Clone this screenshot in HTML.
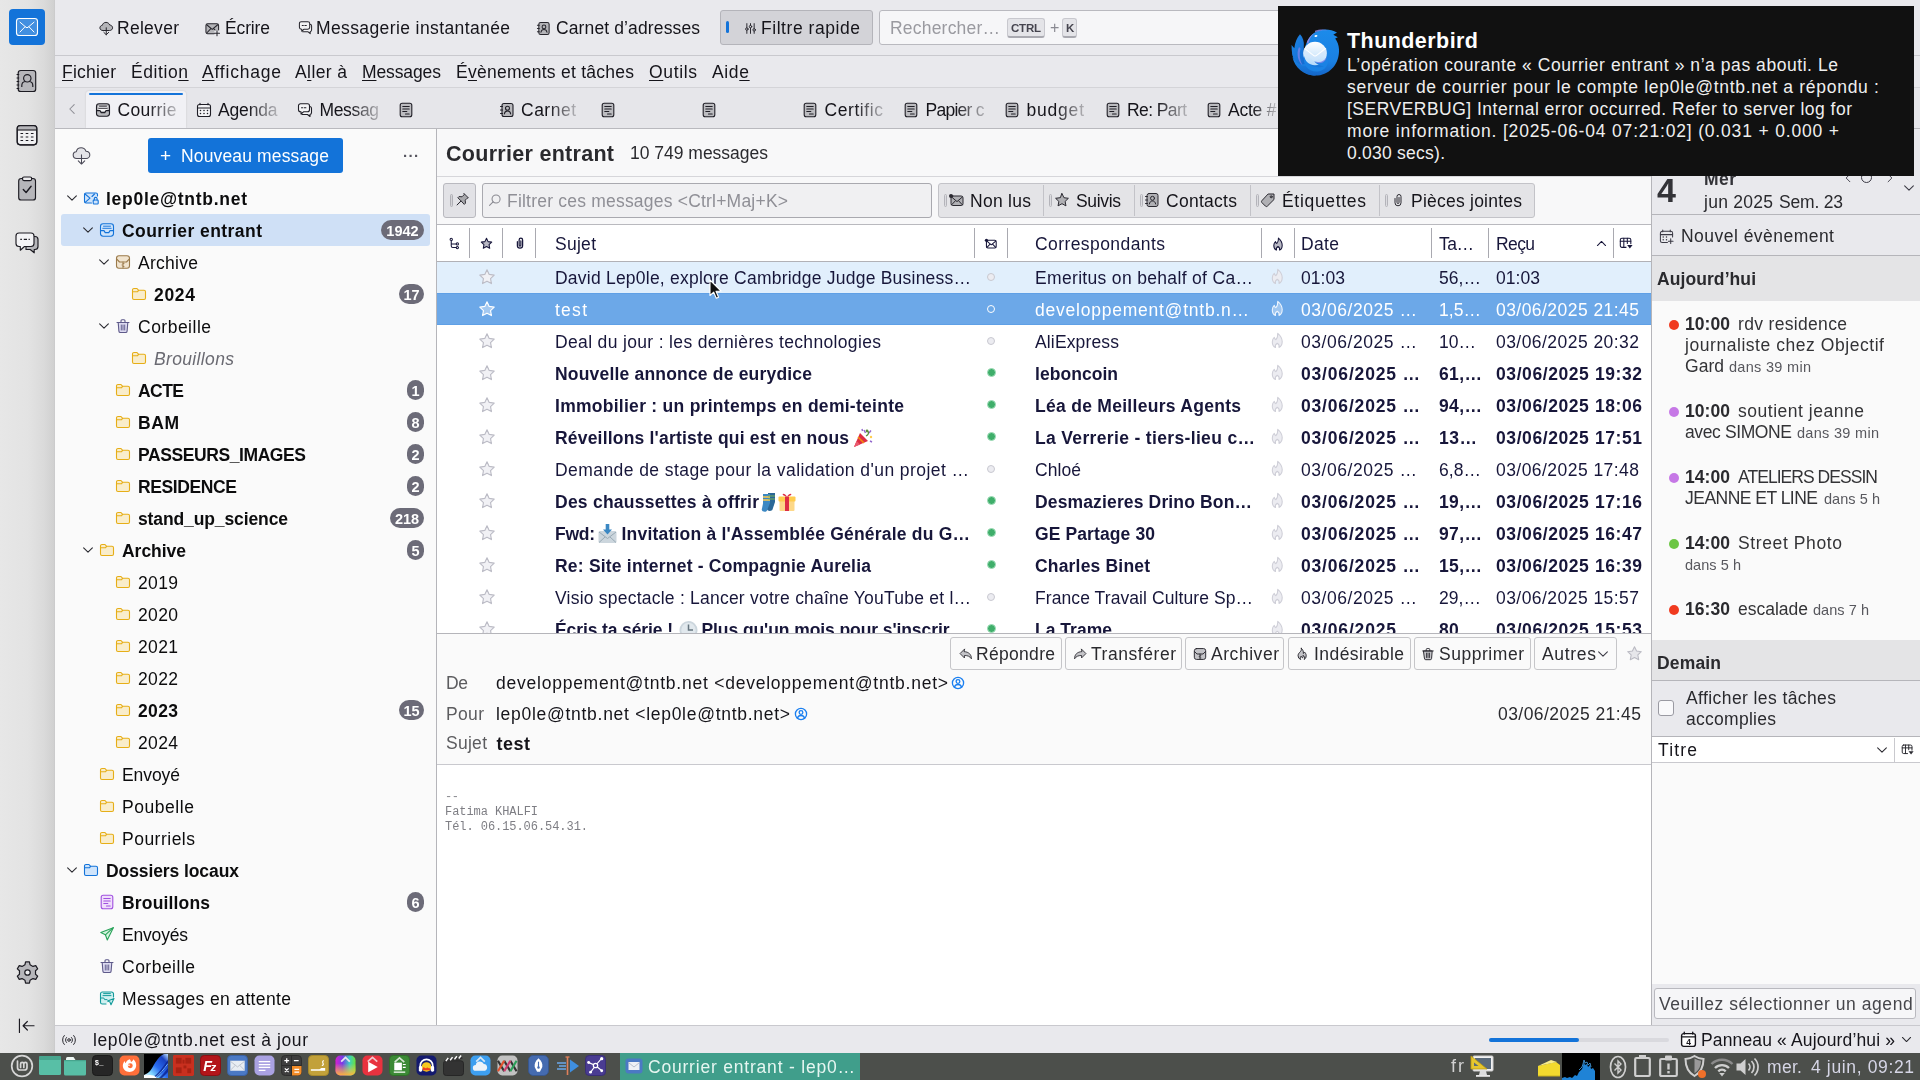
<!DOCTYPE html>
<html><head><meta charset="utf-8"><title>Courrier entrant - lep0le@tntb.net</title>
<style>
html,body{margin:0;padding:0;}
body{width:1920px;height:1080px;overflow:hidden;position:relative;background:#e9e9ed;font-family:"Liberation Sans",sans-serif;}
.a{position:absolute;box-sizing:border-box;}
.t{white-space:nowrap;}
.t span{display:inline-block;}
u{text-decoration:underline;text-underline-offset:2px;text-decoration-thickness:1px;}
</style></head><body><div id="w" style="position:absolute;left:0;top:0;width:1920px;height:1080px;will-change:transform;">
<div class="a" style="left:55px;top:0px;width:1865px;height:55px;background:#e9e9ed;"></div>
<div class="a" style="left:55px;top:55px;width:1865px;height:1px;background:#c9c9ce;"></div>
<div class="a" style="left:55px;top:56px;width:1865px;height:31px;background:#e9e9ed;"></div>
<div class="a" style="left:55px;top:87px;width:1865px;height:1px;background:#d4d4d8;"></div>
<div class="a" style="left:55px;top:88px;width:1865px;height:40px;background:#e6e6ea;"></div>
<div class="a" style="left:0;top:0;width:55px;height:1053px;background:linear-gradient(to right,#e7e7e7 0,#e3e3e3 28px,#dadada 44px,#d0d0d0 54px,#c6c6c8 55px);"></div>
<div class="a" style="left:9px;top:9px;width:36px;height:36px;background:#1373d9;border-radius:4px;"></div>
<svg class="a" style="left:15px;top:17px" width="24" height="20" viewBox="0 0 24 20"><rect x="1.500" y="1.500" width="21" height="17" rx="2.800" fill="#ffffff" fill-opacity=".2" stroke="#ffffff" stroke-width="1.100"/><path d="M5 5.200 11 10.300a1.500 1.500 0 0 0 2 0L19 5.200M5 15l5-5.200M19 15l-5-5.200" fill="none" stroke="#ffffff" stroke-width="1" stroke-linecap="round"/></svg>
<svg class="a" style="left:15px;top:68px" width="24" height="26" viewBox="0 0 24 26">
<rect x="3.200" y="2.500" width="17.500" height="21" rx="2.600" fill="#b6b6ba" stroke="#1c1b22" stroke-width="1.150"/>
<path d="M1.600 6.500h2.600M1.600 10h2.600M1.600 13.500h2.600M1.600 17h2.600M1.600 20.500h2.600" stroke="#1c1b22" stroke-width="1.100"/>
<circle cx="12.300" cy="10.300" r="3.700" fill="none" stroke="#1c1b22" stroke-width="1.150"/>
<path d="M6.800 19v-1.500c0-2.300 1.700-3.800 3.600-4M17.800 19v-1.500c0-2.300-1.700-3.800-3.600-4" fill="none" stroke="#1c1b22" stroke-width="1.150"/>
</svg>
<svg class="a" style="left:15px;top:123px" width="24" height="24" viewBox="0 0 24 24">
<rect x="2.200" y="2.600" width="19.600" height="19.200" rx="3" fill="#f0f0f2" stroke="#1c1b22" stroke-width="1.150"/>
<path d="M2.500 5.500a3 3 0 0 1 3-3h13a3 3 0 0 1 3 3v1.300h-19z" fill="#b6b6ba"/>
<path d="M2.200 7h19.600" stroke="#1c1b22" stroke-width="1.150"/>
<path d="M5.500 10.500h2.600M10.700 10.500h2.600M15.900 10.500h2.600M5.500 14h2.600M10.700 14h2.600M15.900 14h2.600M5.500 17.500h2.600M10.700 17.500h2.600M15.900 17.500h2.600" stroke="#1c1b22" stroke-width="1.150"/>
<rect x="2.200" y="2.600" width="19.600" height="19.200" rx="3" fill="none" stroke="#1c1b22" stroke-width="1.150"/>
</svg>
<svg class="a" style="left:15px;top:175px" width="24" height="27" viewBox="0 0 24 27">
<rect x="3.700" y="3.500" width="16.800" height="21.500" rx="2.600" fill="#b6b6ba" stroke="#1c1b22" stroke-width="1.150"/>
<rect x="7.500" y="2" width="9.200" height="3.600" rx="1.500" fill="#ececee" stroke="#1c1b22" stroke-width="1.200"/>
<path d="M8.300 14.500l2.800 3 5-6.200" fill="none" stroke="#1c1b22" stroke-width="1.400" stroke-linecap="round" stroke-linejoin="round"/>
</svg>
<svg class="a" style="left:14px;top:230px" width="26" height="25" viewBox="0 0 26 25">
<path d="M12 6.500h9a3 3 0 0 1 3 3v7a3 3 0 0 1-3 3h-.8v3.300l-4-3.300H12z" fill="#b6b6ba" stroke="#1c1b22" stroke-width="1.150" stroke-linejoin="round"/>
<path d="M5 3h12a3 3 0 0 1 3 3v7.500a3 3 0 0 1-3 3h-6.500l-4.200 3.700v-3.700H5a3 3 0 0 1-3-3V6a3 3 0 0 1 3-3z" fill="#f4f4f6" stroke="#1c1b22" stroke-width="1.150" stroke-linejoin="round"/>
<path d="M6.300 9.300h1.600M9.800 9.300h3.200M14.600 9.300h1.200" stroke="#1c1b22" stroke-width="1.200"/>
</svg>
<svg style="position:absolute;left:15.5px;top:960.5px;overflow:visible" width="23" height="23" viewBox="0 0 16 16" ><path d="M6.24 2.58 L6.67 0.62 L9.33 0.62 L9.76 2.58 L11.81 3.76 L13.73 3.16 L15.06 5.46 L13.58 6.81 L13.58 9.19 L15.06 10.54 L13.73 12.84 L11.81 12.24 L9.76 13.42 L9.33 15.38 L6.67 15.38 L6.24 13.42 L4.19 12.24 L2.27 12.84 L0.94 10.54 L2.42 9.19 L2.42 6.81 L0.94 5.46 L2.27 3.16 L4.19 3.76Z" fill="#b6b6ba" stroke="#1c1b22" stroke-width="0.85" stroke-linecap="round" stroke-linejoin="round" stroke-linejoin="round"/><circle cx="8" cy="8" r="1.900" fill="#ededef" stroke="#1c1b22" stroke-width="0.85" stroke-linecap="round" stroke-linejoin="round"/></svg>
<svg style="position:absolute;left:16.5px;top:1015.8px;overflow:visible" width="19.5" height="19.5" viewBox="0 0 16 16" ><path d="M2 2.5v11M14 8H5M8.5 4.5 5 8l3.5 3.5" fill="none" stroke="#1c1b22" stroke-width="0.95" stroke-linecap="round" stroke-linejoin="round"/></svg>
<svg style="position:absolute;left:98.5px;top:20.5px;overflow:visible" width="14.5" height="14.5" viewBox="0 0 16 16" ><path d="M4 10.500C2.300 10.500 1 9.200 1 7.600 1 6.100 2.100 4.900 3.600 4.800 4 2.900 5.700 1.500 7.700 1.500c1.900 0 3.500 1.200 4.100 2.900C13.600 4.500 15 5.900 15 7.500c0 1.700-1.400 3-3 3z" fill="#b4b4b8" stroke="#26252c" stroke-width="1.1" stroke-linecap="round" stroke-linejoin="round"/><path d="M8 7.500v7.700M5.300 12.500 8 15.200l2.700-2.700" fill="none" stroke="#26252c" stroke-width="1.1" stroke-linecap="round" stroke-linejoin="round"/></svg>
<div class="a t" style="left:117px;top:16.0px;height:24px;line-height:24px;font-size:17.5px;color:#15141a;letter-spacing:0.281px;"><span id="t1">Relever</span></div>
<svg style="position:absolute;left:205px;top:20.5px;overflow:visible" width="15" height="15" viewBox="0 0 16 16" ><rect x="1" y="3" width="13.500" height="10.500" rx="1.800" fill="#b4b4b8" stroke="#26252c" stroke-width="1.1" stroke-linecap="round" stroke-linejoin="round"/><path d="M1.800 4 7.700 9l5.900-5M1.800 12.800l4.200-4.300M9.500 8.500l1.500 1.500" fill="none" stroke="#26252c" stroke-width="1.1" stroke-linecap="round" stroke-linejoin="round"/><rect x="10" y="10" width="6" height="6" fill="#e9e9ed" stroke="none"/><path d="M12.800 10.300v5.400M10.100 13h5.400" fill="none" stroke="#26252c" stroke-width="1.1" stroke-linecap="round" stroke-linejoin="round"/></svg>
<div class="a t" style="left:225px;top:16.0px;height:24px;line-height:24px;font-size:17.5px;color:#15141a;letter-spacing:-0.141px;"><span id="t2">Écrire</span></div>
<svg style="position:absolute;left:297.5px;top:20px;overflow:visible" width="15" height="15" viewBox="0 0 16 16" ><path d="M5 12.5h5.5l2.5 2v-2a2 2 0 0 0 1.5-2V6.5a2 2 0 0 0-2-2" fill="#f2f2f4" stroke="#26252c" stroke-width="1.1" stroke-linecap="round" stroke-linejoin="round"/><path d="M3.5 1.8h7a2 2 0 0 1 2 2v4a2 2 0 0 1-2 2H6.5l-2.5 2.2v-2.2h-.5a2 2 0 0 1-2-2v-4a2 2 0 0 1 2-2z" fill="#f2f2f4" stroke="#26252c" stroke-width="1.1" stroke-linecap="round" stroke-linejoin="round"/><path d="M4.5 5.8h1.2M7.3 5.8h1.6" fill="none" stroke="#26252c" stroke-width="1.1" stroke-linecap="round" stroke-linejoin="round"/></svg>
<div class="a t" style="left:316px;top:16.0px;height:24px;line-height:24px;font-size:17.5px;color:#15141a;letter-spacing:0.390px;"><span id="t3">Messagerie instantanée</span></div>
<svg style="position:absolute;left:536px;top:20.5px;overflow:visible" width="15" height="15" viewBox="0 0 16 16" ><rect x="3" y="1.5" width="11" height="13" rx="2" fill="#b4b4b8" stroke="#26252c" stroke-width="1.1" stroke-linecap="round" stroke-linejoin="round"/><path d="M1.5 4.5h2M1.5 8h2M1.5 11.5h2" fill="none" stroke="#26252c" stroke-width="1.1" stroke-linecap="round" stroke-linejoin="round"/><circle cx="8.5" cy="6.3" r="2" fill="none" stroke="#26252c" stroke-width="1.1" stroke-linecap="round" stroke-linejoin="round"/><path d="M5.3 12c.3-2 1.6-3 3.2-3s2.9 1 3.2 3" fill="none" stroke="#26252c" stroke-width="1.1" stroke-linecap="round" stroke-linejoin="round"/></svg>
<div class="a t" style="left:556px;top:16.0px;height:24px;line-height:24px;font-size:17.5px;color:#15141a;letter-spacing:0.124px;"><span id="t4">Carnet d’adresses</span></div>
<div class="a" style="left:720px;top:10px;width:153px;height:35px;background:#d3d3d8;border:1px solid #b4b4ba;border-radius:3px;"></div>
<div class="a" style="left:726px;top:21px;width:3px;height:12px;background:#1373d9;border-radius:1.5px;"></div>
<svg style="position:absolute;left:743.5px;top:21.5px;overflow:visible" width="13" height="13" viewBox="0 0 16 16" ><path d="M3.5 2v5M3.5 10.5V14M8 2v2M8 7.5V14M12.5 2v6M12.5 11.5V14" fill="none" stroke="#26252c" stroke-width="1.2" stroke-linecap="round" stroke-linejoin="round"/><circle cx="3.5" cy="8.7" r="1.5" fill="none" stroke="#26252c" stroke-width="1.2" stroke-linecap="round" stroke-linejoin="round"/><circle cx="8" cy="5.7" r="1.5" fill="none" stroke="#26252c" stroke-width="1.2" stroke-linecap="round" stroke-linejoin="round"/><circle cx="12.5" cy="9.7" r="1.5" fill="none" stroke="#26252c" stroke-width="1.2" stroke-linecap="round" stroke-linejoin="round"/></svg>
<div class="a t" style="left:761px;top:16.0px;height:24px;line-height:24px;font-size:17.5px;color:#15141a;letter-spacing:0.549px;"><span id="t5">Filtre rapide</span></div>
<div class="a" style="left:879px;top:10px;width:420px;height:35px;background:#f6f6f8;border:1px solid #b9b9bf;border-radius:3px;"></div>
<div class="a t" style="left:890px;top:16.0px;height:24px;line-height:24px;font-size:17.5px;color:#9a9aa0;letter-spacing:0.203px;"><span id="t6">Rechercher…</span></div>
<div class="a" style="left:1007px;top:18px;width:38px;height:20px;background:#e4e4e8;border:1px solid #c8c8ce;border-radius:3px;border-bottom:2px solid #a9a9b0;"></div>
<div class="a t" style="left:1011px;top:16.0px;height:24px;line-height:24px;font-size:11.5px;color:#45444e;font-weight:bold;letter-spacing:-0.222px;"><span id="t7">CTRL</span></div>
<div class="a t" style="left:1050px;top:16.0px;height:24px;line-height:24px;font-size:16px;color:#8a8a92;"><span id="t8">+</span></div>
<div class="a" style="left:1062px;top:18px;width:15px;height:20px;background:#e4e4e8;border:1px solid #c8c8ce;border-radius:3px;border-bottom:2px solid #a9a9b0;"></div>
<div class="a t" style="left:1066px;top:16.0px;height:24px;line-height:24px;font-size:11.5px;color:#45444e;font-weight:bold;letter-spacing:-0.312px;"><span id="t9">K</span></div>
<div class="a t" style="left:62px;top:60.0px;height:24px;line-height:24px;font-size:17.5px;color:#15141a;letter-spacing:0.246px;"><span id="t10"><u>F</u>ichier</span></div>
<div class="a t" style="left:131px;top:60.0px;height:24px;line-height:24px;font-size:17.5px;color:#15141a;letter-spacing:0.577px;"><span id="t11">Éditio<u>n</u></span></div>
<div class="a t" style="left:202px;top:60.0px;height:24px;line-height:24px;font-size:17.5px;color:#15141a;letter-spacing:0.793px;"><span id="t12"><u>A</u>ffichage</span></div>
<div class="a t" style="left:295px;top:60.0px;height:24px;line-height:24px;font-size:17.5px;color:#15141a;letter-spacing:0.395px;"><span id="t13">A<u>l</u>ler à</span></div>
<div class="a t" style="left:362px;top:60.0px;height:24px;line-height:24px;font-size:17.5px;color:#15141a;letter-spacing:-0.109px;"><span id="t14"><u>M</u>essages</span></div>
<div class="a t" style="left:456px;top:60.0px;height:24px;line-height:24px;font-size:17.5px;color:#15141a;letter-spacing:0.253px;"><span id="t15">É<u>v</u>ènements et tâches</span></div>
<div class="a t" style="left:649px;top:60.0px;height:24px;line-height:24px;font-size:17.5px;color:#15141a;letter-spacing:0.650px;"><span id="t16"><u>O</u>utils</span></div>
<div class="a t" style="left:712px;top:60.0px;height:24px;line-height:24px;font-size:17.5px;color:#15141a;letter-spacing:0.656px;"><span id="t17">Aid<u>e</u></span></div>
<svg style="position:absolute;left:65px;top:102px;overflow:visible" width="14" height="14" viewBox="0 0 16 16" ><path d="M10.5 3 5.5 8l5 5" fill="none" stroke="#8f8f96" stroke-width="1.2" stroke-linecap="round" stroke-linejoin="round"/></svg>
<div class="a" style="left:86px;top:91px;width:100px;height:37px;background:#f1f1f5;border-radius:3px;border-bottom-left-radius:0;border-bottom-right-radius:0;box-shadow:0 0 2px rgba(0,0,0,.15);"></div>
<div class="a" style="left:89px;top:93px;width:94px;height:2px;background:#1373d9;border-radius:1px;"></div>
<svg style="position:absolute;left:94.5px;top:102px;overflow:visible" width="16" height="16" viewBox="0 0 16 16" ><rect x="1.500" y="1.800" width="13" height="12.400" rx="2.600" fill="#b8b8bc" stroke="#1f1e26" stroke-width="1.1" stroke-linecap="round" stroke-linejoin="round"/><path d="M3.500 4h9v5h-9z" fill="#f6f6f8" stroke="none"/><path d="M1.800 8.600h3.200l1.200 2h3.600l1.200-2h3.200" fill="none" stroke="#1f1e26" stroke-width="1.1" stroke-linecap="round" stroke-linejoin="round"/><path d="M3.800 6.300h8.400M4.500 4.200h7" fill="none" stroke="#1f1e26" stroke-width="0.935" stroke-linecap="round" stroke-linejoin="round"/></svg>
<div class="a t" style="left:117.5px;top:98.0px;height:24px;line-height:24px;font-size:17.5px;color:#15141a;letter-spacing:0.268px;width:63px;overflow:hidden;-webkit-mask-image:linear-gradient(to right,#000 29.5px,transparent 67.85px);mask-image:linear-gradient(to right,#000 29.5px,transparent 67.85px);"><span id="t18">Courrie</span></div>
<svg style="position:absolute;left:195.5px;top:102px;overflow:visible" width="16" height="16" viewBox="0 0 16 16" ><rect x="1.5" y="2.5" width="13" height="12" rx="2" fill="#f4f4f6" stroke="#1f1e26" stroke-width="1.1" stroke-linecap="round" stroke-linejoin="round"/><path d="M1.5 6h13" fill="none" stroke="#1f1e26" stroke-width="1.1" stroke-linecap="round" stroke-linejoin="round"/><path d="M4 1.2v1.6M12 1.2v1.6" fill="none" stroke="#1f1e26" stroke-width="1.1" stroke-linecap="round" stroke-linejoin="round"/><path d="M4.5 8.5h.01M8 8.5h.01M11.5 8.5h.01M4.5 11.5h.01M8 11.5h.01M11.5 11.5h.01" fill="none" stroke="#1f1e26" stroke-width="1.54" stroke-linecap="round" stroke-linejoin="round"/></svg>
<div class="a t" style="left:218px;top:98.0px;height:24px;line-height:24px;font-size:17.5px;color:#15141a;letter-spacing:-0.168px;width:63.5px;overflow:hidden;-webkit-mask-image:linear-gradient(to right,#000 29.75px,transparent 68.425px);mask-image:linear-gradient(to right,#000 29.75px,transparent 68.425px);"><span id="t19">Agenda</span></div>
<svg style="position:absolute;left:296.5px;top:102px;overflow:visible" width="16" height="16" viewBox="0 0 16 16" ><path d="M5 12.5h5.5l2.5 2v-2a2 2 0 0 0 1.5-2V6.5a2 2 0 0 0-2-2" fill="#f4f4f6" stroke="#1f1e26" stroke-width="1.1" stroke-linecap="round" stroke-linejoin="round"/><path d="M3.5 1.8h7a2 2 0 0 1 2 2v4a2 2 0 0 1-2 2H6.5l-2.5 2.2v-2.2h-.5a2 2 0 0 1-2-2v-4a2 2 0 0 1 2-2z" fill="#f4f4f6" stroke="#1f1e26" stroke-width="1.1" stroke-linecap="round" stroke-linejoin="round"/><path d="M4.5 5.8h1.2M7.3 5.8h1.6" fill="none" stroke="#1f1e26" stroke-width="1.1" stroke-linecap="round" stroke-linejoin="round"/></svg>
<div class="a t" style="left:319.5px;top:98.0px;height:24px;line-height:24px;font-size:17.5px;color:#15141a;letter-spacing:-0.355px;width:63.5px;overflow:hidden;-webkit-mask-image:linear-gradient(to right,#000 29.75px,transparent 68.425px);mask-image:linear-gradient(to right,#000 29.75px,transparent 68.425px);"><span id="t20">Messag</span></div>
<svg style="position:absolute;left:397.5px;top:102px;overflow:visible" width="16" height="16" viewBox="0 0 16 16" ><rect x="2.200" y="1.200" width="11.600" height="13.600" rx="2" fill="#bcbcc0" stroke="#1f1e26" stroke-width="1.1" stroke-linecap="round" stroke-linejoin="round"/><path d="M4.800 4.500h6.400M4.800 7h6.400M4.800 9.500h4M7.500 12h3.700" fill="none" stroke="#1f1e26" stroke-width="1.1" stroke-linecap="round" stroke-linejoin="round"/></svg>
<svg style="position:absolute;left:498.5px;top:102px;overflow:visible" width="16" height="16" viewBox="0 0 16 16" ><rect x="3" y="1.5" width="11" height="13" rx="2" fill="#b8b8bc" stroke="#1f1e26" stroke-width="1.1" stroke-linecap="round" stroke-linejoin="round"/><path d="M1.5 4.5h2M1.5 8h2M1.5 11.5h2" fill="none" stroke="#1f1e26" stroke-width="1.1" stroke-linecap="round" stroke-linejoin="round"/><circle cx="8.5" cy="6.3" r="2" fill="none" stroke="#1f1e26" stroke-width="1.1" stroke-linecap="round" stroke-linejoin="round"/><path d="M5.3 12c.3-2 1.6-3 3.2-3s2.9 1 3.2 3" fill="none" stroke="#1f1e26" stroke-width="1.1" stroke-linecap="round" stroke-linejoin="round"/></svg>
<div class="a t" style="left:521px;top:98.0px;height:24px;line-height:24px;font-size:17.5px;color:#15141a;letter-spacing:0.493px;width:59px;overflow:hidden;-webkit-mask-image:linear-gradient(to right,#000 27.5px,transparent 63.24999999999999px);mask-image:linear-gradient(to right,#000 27.5px,transparent 63.24999999999999px);"><span id="t21">Carnet</span></div>
<svg style="position:absolute;left:599.5px;top:102px;overflow:visible" width="16" height="16" viewBox="0 0 16 16" ><rect x="2.200" y="1.200" width="11.600" height="13.600" rx="2" fill="#bcbcc0" stroke="#1f1e26" stroke-width="1.1" stroke-linecap="round" stroke-linejoin="round"/><path d="M4.800 4.500h6.400M4.800 7h6.400M4.800 9.500h4M7.500 12h3.700" fill="none" stroke="#1f1e26" stroke-width="1.1" stroke-linecap="round" stroke-linejoin="round"/></svg>
<svg style="position:absolute;left:700.5px;top:102px;overflow:visible" width="16" height="16" viewBox="0 0 16 16" ><rect x="2.200" y="1.200" width="11.600" height="13.600" rx="2" fill="#bcbcc0" stroke="#1f1e26" stroke-width="1.1" stroke-linecap="round" stroke-linejoin="round"/><path d="M4.800 4.500h6.400M4.800 7h6.400M4.800 9.500h4M7.500 12h3.700" fill="none" stroke="#1f1e26" stroke-width="1.1" stroke-linecap="round" stroke-linejoin="round"/></svg>
<svg style="position:absolute;left:801.5px;top:102px;overflow:visible" width="16" height="16" viewBox="0 0 16 16" ><rect x="2.200" y="1.200" width="11.600" height="13.600" rx="2" fill="#bcbcc0" stroke="#1f1e26" stroke-width="1.1" stroke-linecap="round" stroke-linejoin="round"/><path d="M4.800 4.500h6.400M4.800 7h6.400M4.800 9.500h4M7.500 12h3.700" fill="none" stroke="#1f1e26" stroke-width="1.1" stroke-linecap="round" stroke-linejoin="round"/></svg>
<div class="a t" style="left:824.5px;top:98.0px;height:24px;line-height:24px;font-size:17.5px;color:#15141a;letter-spacing:0.578px;width:62.5px;overflow:hidden;-webkit-mask-image:linear-gradient(to right,#000 29.25px,transparent 67.27499999999999px);mask-image:linear-gradient(to right,#000 29.25px,transparent 67.27499999999999px);"><span id="t22">Certific</span></div>
<svg style="position:absolute;left:902.5px;top:102px;overflow:visible" width="16" height="16" viewBox="0 0 16 16" ><rect x="2.200" y="1.200" width="11.600" height="13.600" rx="2" fill="#bcbcc0" stroke="#1f1e26" stroke-width="1.1" stroke-linecap="round" stroke-linejoin="round"/><path d="M4.800 4.500h6.400M4.800 7h6.400M4.800 9.500h4M7.500 12h3.700" fill="none" stroke="#1f1e26" stroke-width="1.1" stroke-linecap="round" stroke-linejoin="round"/></svg>
<div class="a t" style="left:925.5px;top:98.0px;height:24px;line-height:24px;font-size:17.5px;color:#15141a;letter-spacing:-0.744px;width:63px;overflow:hidden;-webkit-mask-image:linear-gradient(to right,#000 29.5px,transparent 67.85px);mask-image:linear-gradient(to right,#000 29.5px,transparent 67.85px);"><span id="t23">Papier c</span></div>
<svg style="position:absolute;left:1003.5px;top:102px;overflow:visible" width="16" height="16" viewBox="0 0 16 16" ><rect x="2.200" y="1.200" width="11.600" height="13.600" rx="2" fill="#bcbcc0" stroke="#1f1e26" stroke-width="1.1" stroke-linecap="round" stroke-linejoin="round"/><path d="M4.800 4.500h6.400M4.800 7h6.400M4.800 9.500h4M7.500 12h3.700" fill="none" stroke="#1f1e26" stroke-width="1.1" stroke-linecap="round" stroke-linejoin="round"/></svg>
<div class="a t" style="left:1026.5px;top:98.0px;height:24px;line-height:24px;font-size:17.5px;color:#15141a;letter-spacing:0.793px;width:61.5px;overflow:hidden;-webkit-mask-image:linear-gradient(to right,#000 28.75px,transparent 66.125px);mask-image:linear-gradient(to right,#000 28.75px,transparent 66.125px);"><span id="t24">budget</span></div>
<svg style="position:absolute;left:1104.5px;top:102px;overflow:visible" width="16" height="16" viewBox="0 0 16 16" ><rect x="2.200" y="1.200" width="11.600" height="13.600" rx="2" fill="#bcbcc0" stroke="#1f1e26" stroke-width="1.1" stroke-linecap="round" stroke-linejoin="round"/><path d="M4.800 4.500h6.400M4.800 7h6.400M4.800 9.500h4M7.500 12h3.700" fill="none" stroke="#1f1e26" stroke-width="1.1" stroke-linecap="round" stroke-linejoin="round"/></svg>
<div class="a t" style="left:1127px;top:98.0px;height:24px;line-height:24px;font-size:17.5px;color:#15141a;letter-spacing:-0.599px;width:64px;overflow:hidden;-webkit-mask-image:linear-gradient(to right,#000 30.0px,transparent 69.0px);mask-image:linear-gradient(to right,#000 30.0px,transparent 69.0px);"><span id="t25">Re: Part</span></div>
<svg style="position:absolute;left:1205.5px;top:102px;overflow:visible" width="16" height="16" viewBox="0 0 16 16" ><rect x="2.200" y="1.200" width="11.600" height="13.600" rx="2" fill="#bcbcc0" stroke="#1f1e26" stroke-width="1.1" stroke-linecap="round" stroke-linejoin="round"/><path d="M4.800 4.500h6.400M4.800 7h6.400M4.800 9.500h4M7.500 12h3.700" fill="none" stroke="#1f1e26" stroke-width="1.1" stroke-linecap="round" stroke-linejoin="round"/></svg>
<div class="a t" style="left:1228px;top:98.0px;height:24px;line-height:24px;font-size:17.5px;color:#15141a;letter-spacing:-0.223px;width:52.5px;overflow:hidden;-webkit-mask-image:linear-gradient(to right,#000 24.25px,transparent 55.775px);mask-image:linear-gradient(to right,#000 24.25px,transparent 55.775px);"><span id="t26">Acte #</span></div>
<div class="a" style="left:55px;top:128px;width:381px;height:898px;background:#fafafa;"></div>
<div class="a" style="left:436px;top:128px;width:1px;height:898px;background:#b5b5ba;"></div>
<svg style="position:absolute;left:72px;top:146px;overflow:visible" width="19" height="19" viewBox="0 0 16 16" ><path d="M4 10.500C2.300 10.500 1 9.200 1 7.600 1 6.100 2.100 4.900 3.600 4.800 4 2.900 5.700 1.500 7.700 1.500c1.900 0 3.500 1.200 4.100 2.900C13.600 4.500 15 5.900 15 7.500c0 1.700-1.400 3-3 3z" fill="#e4e4e8" stroke="#4a4956" stroke-width="0.9" stroke-linecap="round" stroke-linejoin="round"/><path d="M8 7.500v7.700M5.300 12.500 8 15.200l2.700-2.700" fill="none" stroke="#4a4956" stroke-width="0.9" stroke-linecap="round" stroke-linejoin="round"/></svg>
<div class="a" style="left:148px;top:138px;width:195px;height:35px;background:#1373d9;border-radius:3px;"></div>
<div class="a t" style="left:160px;top:143.5px;height:24px;line-height:24px;font-size:19px;color:#fff;"><span id="t27">+</span></div>
<div class="a t" style="left:181px;top:144.0px;height:24px;line-height:24px;font-size:17.5px;color:#fff;letter-spacing:0.147px;"><span id="t28">Nouveau message</span></div>
<div class="a t" style="left:403px;top:143.5px;height:24px;line-height:24px;font-size:15px;color:#55545e;font-weight:bold;letter-spacing:0.5px;"><span id="t29">···</span></div>
<svg style="position:absolute;left:65px;top:191px;overflow:visible" width="14" height="14" viewBox="0 0 16 16" ><path d="M3 5.5 8 10.5l5-5" fill="none" stroke="#2a2a30" stroke-width="1.25" stroke-linecap="round" stroke-linejoin="round"/></svg>
<svg style="position:absolute;left:83px;top:189.8px;overflow:visible" width="16" height="16" viewBox="0 0 16 16" ><path d="M14.5 6V4.5A1.5 1.5 0 0 0 13 3H3A1.5 1.5 0 0 0 1.5 4.5v7A1.5 1.5 0 0 0 3 13h5.5" fill="#cfe4fb" stroke="#1373d9" stroke-width="1.1" stroke-linecap="round" stroke-linejoin="round"/><path d="M2 4l5 4.2L2.2 12.4M9 6.5 11.5 4" fill="none" stroke="#1373d9" stroke-width="1.1" stroke-linecap="round" stroke-linejoin="round"/><rect x="10.2" y="10" width="5" height="4" rx="0.8" fill="#cfe4fb" stroke="#1373d9" stroke-width="1.1" stroke-linecap="round" stroke-linejoin="round"/><path d="M11.3 10V8.8a1.4 1.4 0 0 1 2.8 0V10" fill="none" stroke="#1373d9" stroke-width="1.1" stroke-linecap="round" stroke-linejoin="round"/></svg>
<div class="a t" style="left:106px;top:186.6px;height:24px;line-height:24px;font-size:17.5px;color:#0c0c0d;font-weight:bold;letter-spacing:0.727px;"><span id="t30">lep0le@tntb.net</span></div>
<div class="a" style="left:61px;top:214px;width:369px;height:32px;background:#cfe0f6;border-radius:3px;"></div>
<svg style="position:absolute;left:81px;top:223px;overflow:visible" width="14" height="14" viewBox="0 0 16 16" ><path d="M3 5.5 8 10.5l5-5" fill="none" stroke="#2a2a30" stroke-width="1.25" stroke-linecap="round" stroke-linejoin="round"/></svg>
<svg style="position:absolute;left:99px;top:221.8px;overflow:visible" width="16" height="16" viewBox="0 0 16 16" ><rect x="1.500" y="1.800" width="13" height="12.400" rx="2.600" fill="#cfe4fb" stroke="#1373d9" stroke-width="1.1" stroke-linecap="round" stroke-linejoin="round"/><path d="M3.500 4h9v5h-9z" fill="none" stroke="none"/><path d="M1.800 8.600h3.200l1.200 2h3.600l1.200-2h3.200" fill="none" stroke="#1373d9" stroke-width="1.1" stroke-linecap="round" stroke-linejoin="round"/><path d="M3.800 6.300h8.400M4.500 4.200h7" fill="none" stroke="#1373d9" stroke-width="0.935" stroke-linecap="round" stroke-linejoin="round"/></svg>
<div class="a t" style="left:122px;top:218.6px;height:24px;line-height:24px;font-size:17.5px;color:#0c0c0d;font-weight:bold;letter-spacing:0.452px;"><span id="t31">Courrier entrant</span></div>
<div class="a" style="left:381px;top:220px;width:43px;height:20px;background:#6c6b78;border-radius:10px;"></div>
<div class="a t" style="left:381px;top:218.5px;height:24px;line-height:24px;font-size:14.5px;color:#fff;font-weight:bold;width:43px;text-align:center;"><span id="t32">1942</span></div>
<svg style="position:absolute;left:97px;top:255px;overflow:visible" width="14" height="14" viewBox="0 0 16 16" ><path d="M3 5.5 8 10.5l5-5" fill="none" stroke="#2a2a30" stroke-width="1.25" stroke-linecap="round" stroke-linejoin="round"/></svg>
<svg style="position:absolute;left:115px;top:253.8px;overflow:visible" width="16" height="16" viewBox="0 0 16 16" ><rect x="1.5" y="1.8" width="13" height="12.4" rx="2.5" fill="#f1e4cf" stroke="#9b7a4a" stroke-width="1.1" stroke-linecap="round" stroke-linejoin="round"/><path d="M1.8 5.2 4.5 8h7l2.7-2.8" fill="none" stroke="#9b7a4a" stroke-width="1.1" stroke-linecap="round" stroke-linejoin="round"/><path d="M8 8v6M8 9.5h1M8 11h-1M8 12.5h1" fill="none" stroke="#9b7a4a" stroke-width="0.8800000000000001" stroke-linecap="round" stroke-linejoin="round"/></svg>
<div class="a t" style="left:138px;top:250.60000000000002px;height:24px;line-height:24px;font-size:17.5px;color:#0c0c0d;letter-spacing:0.273px;"><span id="t33">Archive</span></div>
<svg style="position:absolute;left:131px;top:285.8px;overflow:visible" width="16" height="16" viewBox="0 0 16 16" ><path d="M1.5 4a1.5 1.5 0 0 1 1.5-1.5h3l1.6 1.8H13A1.5 1.5 0 0 1 14.5 5.8v6.2A1.5 1.5 0 0 1 13 13.5H3A1.5 1.5 0 0 1 1.5 12z" fill="#f9edcb" stroke="#e6ae17" stroke-width="1.1" stroke-linecap="round" stroke-linejoin="round"/><path d="M1.8 5.8h4.6l1.2-1.4" fill="none" stroke="#e6ae17" stroke-width="1.1" stroke-linecap="round" stroke-linejoin="round"/></svg>
<div class="a t" style="left:154px;top:282.6px;height:24px;line-height:24px;font-size:17.5px;color:#0c0c0d;font-weight:bold;letter-spacing:0.688px;"><span id="t34">2024</span></div>
<div class="a" style="left:399px;top:284px;width:25px;height:20px;background:#6c6b78;border-radius:10px;"></div>
<div class="a t" style="left:399px;top:282.5px;height:24px;line-height:24px;font-size:14.5px;color:#fff;font-weight:bold;width:25px;text-align:center;"><span id="t35">17</span></div>
<svg style="position:absolute;left:97px;top:319px;overflow:visible" width="14" height="14" viewBox="0 0 16 16" ><path d="M3 5.5 8 10.5l5-5" fill="none" stroke="#2a2a30" stroke-width="1.25" stroke-linecap="round" stroke-linejoin="round"/></svg>
<svg style="position:absolute;left:115px;top:317.8px;overflow:visible" width="16" height="16" viewBox="0 0 16 16" ><path d="M3.2 4.5h9.6l-.7 8.6a1.5 1.5 0 0 1-1.5 1.4H5.4a1.5 1.5 0 0 1-1.5-1.4z" fill="#dcdaf0" stroke="#5e5a8a" stroke-width="1.1" stroke-linecap="round" stroke-linejoin="round"/><path d="M2 4.5h12M6 4.2V2.8a1 1 0 0 1 1-1h2a1 1 0 0 1 1 1v1.4" fill="none" stroke="#5e5a8a" stroke-width="1.1" stroke-linecap="round" stroke-linejoin="round"/><path d="M6.3 7v5M8 7v5M9.7 7v5" fill="none" stroke="#5e5a8a" stroke-width="0.935" stroke-linecap="round" stroke-linejoin="round"/></svg>
<div class="a t" style="left:138px;top:314.6px;height:24px;line-height:24px;font-size:17.5px;color:#0c0c0d;letter-spacing:0.492px;"><span id="t36">Corbeille</span></div>
<svg style="position:absolute;left:131px;top:349.8px;overflow:visible" width="16" height="16" viewBox="0 0 16 16" ><path d="M1.5 4a1.5 1.5 0 0 1 1.5-1.5h3l1.6 1.8H13A1.5 1.5 0 0 1 14.5 5.8v6.2A1.5 1.5 0 0 1 13 13.5H3A1.5 1.5 0 0 1 1.5 12z" fill="#f9edcb" stroke="#e6ae17" stroke-width="1.1" stroke-linecap="round" stroke-linejoin="round"/><path d="M1.8 5.8h4.6l1.2-1.4" fill="none" stroke="#e6ae17" stroke-width="1.1" stroke-linecap="round" stroke-linejoin="round"/></svg>
<div class="a t" style="left:154px;top:346.6px;height:24px;line-height:24px;font-size:17.5px;color:#6a6a72;font-style:italic;letter-spacing:0.349px;"><span id="t37">Brouillons</span></div>
<svg style="position:absolute;left:115px;top:381.8px;overflow:visible" width="16" height="16" viewBox="0 0 16 16" ><path d="M1.5 4a1.5 1.5 0 0 1 1.5-1.5h3l1.6 1.8H13A1.5 1.5 0 0 1 14.5 5.8v6.2A1.5 1.5 0 0 1 13 13.5H3A1.5 1.5 0 0 1 1.5 12z" fill="#f9edcb" stroke="#e6ae17" stroke-width="1.1" stroke-linecap="round" stroke-linejoin="round"/><path d="M1.8 5.8h4.6l1.2-1.4" fill="none" stroke="#e6ae17" stroke-width="1.1" stroke-linecap="round" stroke-linejoin="round"/></svg>
<div class="a t" style="left:138px;top:378.6px;height:24px;line-height:24px;font-size:17.5px;color:#0c0c0d;font-weight:bold;letter-spacing:-0.547px;"><span id="t38">ACTE</span></div>
<div class="a" style="left:407px;top:380px;width:17px;height:20px;background:#6c6b78;border-radius:10px;"></div>
<div class="a t" style="left:407px;top:378.5px;height:24px;line-height:24px;font-size:14.5px;color:#fff;font-weight:bold;width:17px;text-align:center;"><span id="t39">1</span></div>
<svg style="position:absolute;left:115px;top:413.8px;overflow:visible" width="16" height="16" viewBox="0 0 16 16" ><path d="M1.5 4a1.5 1.5 0 0 1 1.5-1.5h3l1.6 1.8H13A1.5 1.5 0 0 1 14.5 5.8v6.2A1.5 1.5 0 0 1 13 13.5H3A1.5 1.5 0 0 1 1.5 12z" fill="#f9edcb" stroke="#e6ae17" stroke-width="1.1" stroke-linecap="round" stroke-linejoin="round"/><path d="M1.8 5.8h4.6l1.2-1.4" fill="none" stroke="#e6ae17" stroke-width="1.1" stroke-linecap="round" stroke-linejoin="round"/></svg>
<div class="a t" style="left:138px;top:410.6px;height:24px;line-height:24px;font-size:17.5px;color:#0c0c0d;font-weight:bold;letter-spacing:0.572px;"><span id="t40">BAM</span></div>
<div class="a" style="left:407px;top:412px;width:17px;height:20px;background:#6c6b78;border-radius:10px;"></div>
<div class="a t" style="left:407px;top:410.5px;height:24px;line-height:24px;font-size:14.5px;color:#fff;font-weight:bold;width:17px;text-align:center;"><span id="t41">8</span></div>
<svg style="position:absolute;left:115px;top:445.8px;overflow:visible" width="16" height="16" viewBox="0 0 16 16" ><path d="M1.5 4a1.5 1.5 0 0 1 1.5-1.5h3l1.6 1.8H13A1.5 1.5 0 0 1 14.5 5.8v6.2A1.5 1.5 0 0 1 13 13.5H3A1.5 1.5 0 0 1 1.5 12z" fill="#f9edcb" stroke="#e6ae17" stroke-width="1.1" stroke-linecap="round" stroke-linejoin="round"/><path d="M1.8 5.8h4.6l1.2-1.4" fill="none" stroke="#e6ae17" stroke-width="1.1" stroke-linecap="round" stroke-linejoin="round"/></svg>
<div class="a t" style="left:138px;top:442.6px;height:24px;line-height:24px;font-size:17.5px;color:#0c0c0d;font-weight:bold;letter-spacing:-0.411px;"><span id="t42">PASSEURS_IMAGES</span></div>
<div class="a" style="left:407px;top:444px;width:17px;height:20px;background:#6c6b78;border-radius:10px;"></div>
<div class="a t" style="left:407px;top:442.5px;height:24px;line-height:24px;font-size:14.5px;color:#fff;font-weight:bold;width:17px;text-align:center;"><span id="t43">2</span></div>
<svg style="position:absolute;left:115px;top:477.8px;overflow:visible" width="16" height="16" viewBox="0 0 16 16" ><path d="M1.5 4a1.5 1.5 0 0 1 1.5-1.5h3l1.6 1.8H13A1.5 1.5 0 0 1 14.5 5.8v6.2A1.5 1.5 0 0 1 13 13.5H3A1.5 1.5 0 0 1 1.5 12z" fill="#f9edcb" stroke="#e6ae17" stroke-width="1.1" stroke-linecap="round" stroke-linejoin="round"/><path d="M1.8 5.8h4.6l1.2-1.4" fill="none" stroke="#e6ae17" stroke-width="1.1" stroke-linecap="round" stroke-linejoin="round"/></svg>
<div class="a t" style="left:138px;top:474.6px;height:24px;line-height:24px;font-size:17.5px;color:#0c0c0d;font-weight:bold;letter-spacing:-0.389px;"><span id="t44">RESIDENCE</span></div>
<div class="a" style="left:407px;top:476px;width:17px;height:20px;background:#6c6b78;border-radius:10px;"></div>
<div class="a t" style="left:407px;top:474.5px;height:24px;line-height:24px;font-size:14.5px;color:#fff;font-weight:bold;width:17px;text-align:center;"><span id="t45">2</span></div>
<svg style="position:absolute;left:115px;top:509.8px;overflow:visible" width="16" height="16" viewBox="0 0 16 16" ><path d="M1.5 4a1.5 1.5 0 0 1 1.5-1.5h3l1.6 1.8H13A1.5 1.5 0 0 1 14.5 5.8v6.2A1.5 1.5 0 0 1 13 13.5H3A1.5 1.5 0 0 1 1.5 12z" fill="#f9edcb" stroke="#e6ae17" stroke-width="1.1" stroke-linecap="round" stroke-linejoin="round"/><path d="M1.8 5.8h4.6l1.2-1.4" fill="none" stroke="#e6ae17" stroke-width="1.1" stroke-linecap="round" stroke-linejoin="round"/></svg>
<div class="a t" style="left:138px;top:506.6px;height:24px;line-height:24px;font-size:17.5px;color:#0c0c0d;font-weight:bold;letter-spacing:-0.116px;"><span id="t46">stand_up_science</span></div>
<div class="a" style="left:390px;top:508px;width:34px;height:20px;background:#6c6b78;border-radius:10px;"></div>
<div class="a t" style="left:390px;top:506.5px;height:24px;line-height:24px;font-size:14.5px;color:#fff;font-weight:bold;width:34px;text-align:center;"><span id="t47">218</span></div>
<svg style="position:absolute;left:81px;top:543px;overflow:visible" width="14" height="14" viewBox="0 0 16 16" ><path d="M3 5.5 8 10.5l5-5" fill="none" stroke="#2a2a30" stroke-width="1.25" stroke-linecap="round" stroke-linejoin="round"/></svg>
<svg style="position:absolute;left:99px;top:541.8px;overflow:visible" width="16" height="16" viewBox="0 0 16 16" ><path d="M1.5 4a1.5 1.5 0 0 1 1.5-1.5h3l1.6 1.8H13A1.5 1.5 0 0 1 14.5 5.8v6.2A1.5 1.5 0 0 1 13 13.5H3A1.5 1.5 0 0 1 1.5 12z" fill="#f9edcb" stroke="#e6ae17" stroke-width="1.1" stroke-linecap="round" stroke-linejoin="round"/><path d="M1.8 5.8h4.6l1.2-1.4" fill="none" stroke="#e6ae17" stroke-width="1.1" stroke-linecap="round" stroke-linejoin="round"/></svg>
<div class="a t" style="left:122px;top:538.6px;height:24px;line-height:24px;font-size:17.5px;color:#0c0c0d;font-weight:bold;letter-spacing:-0.034px;"><span id="t48">Archive</span></div>
<div class="a" style="left:407px;top:540px;width:17px;height:20px;background:#6c6b78;border-radius:10px;"></div>
<div class="a t" style="left:407px;top:538.5px;height:24px;line-height:24px;font-size:14.5px;color:#fff;font-weight:bold;width:17px;text-align:center;"><span id="t49">5</span></div>
<svg style="position:absolute;left:115px;top:573.8px;overflow:visible" width="16" height="16" viewBox="0 0 16 16" ><path d="M1.5 4a1.5 1.5 0 0 1 1.5-1.5h3l1.6 1.8H13A1.5 1.5 0 0 1 14.5 5.8v6.2A1.5 1.5 0 0 1 13 13.5H3A1.5 1.5 0 0 1 1.5 12z" fill="#f9edcb" stroke="#e6ae17" stroke-width="1.1" stroke-linecap="round" stroke-linejoin="round"/><path d="M1.8 5.8h4.6l1.2-1.4" fill="none" stroke="#e6ae17" stroke-width="1.1" stroke-linecap="round" stroke-linejoin="round"/></svg>
<div class="a t" style="left:138px;top:570.6px;height:24px;line-height:24px;font-size:17.5px;color:#0c0c0d;letter-spacing:0.354px;"><span id="t50">2019</span></div>
<svg style="position:absolute;left:115px;top:605.8px;overflow:visible" width="16" height="16" viewBox="0 0 16 16" ><path d="M1.5 4a1.5 1.5 0 0 1 1.5-1.5h3l1.6 1.8H13A1.5 1.5 0 0 1 14.5 5.8v6.2A1.5 1.5 0 0 1 13 13.5H3A1.5 1.5 0 0 1 1.5 12z" fill="#f9edcb" stroke="#e6ae17" stroke-width="1.1" stroke-linecap="round" stroke-linejoin="round"/><path d="M1.8 5.8h4.6l1.2-1.4" fill="none" stroke="#e6ae17" stroke-width="1.1" stroke-linecap="round" stroke-linejoin="round"/></svg>
<div class="a t" style="left:138px;top:602.6px;height:24px;line-height:24px;font-size:17.5px;color:#0c0c0d;letter-spacing:0.354px;"><span id="t51">2020</span></div>
<svg style="position:absolute;left:115px;top:637.8px;overflow:visible" width="16" height="16" viewBox="0 0 16 16" ><path d="M1.5 4a1.5 1.5 0 0 1 1.5-1.5h3l1.6 1.8H13A1.5 1.5 0 0 1 14.5 5.8v6.2A1.5 1.5 0 0 1 13 13.5H3A1.5 1.5 0 0 1 1.5 12z" fill="#f9edcb" stroke="#e6ae17" stroke-width="1.1" stroke-linecap="round" stroke-linejoin="round"/><path d="M1.8 5.8h4.6l1.2-1.4" fill="none" stroke="#e6ae17" stroke-width="1.1" stroke-linecap="round" stroke-linejoin="round"/></svg>
<div class="a t" style="left:138px;top:634.6px;height:24px;line-height:24px;font-size:17.5px;color:#0c0c0d;letter-spacing:0.354px;"><span id="t52">2021</span></div>
<svg style="position:absolute;left:115px;top:669.8px;overflow:visible" width="16" height="16" viewBox="0 0 16 16" ><path d="M1.5 4a1.5 1.5 0 0 1 1.5-1.5h3l1.6 1.8H13A1.5 1.5 0 0 1 14.5 5.8v6.2A1.5 1.5 0 0 1 13 13.5H3A1.5 1.5 0 0 1 1.5 12z" fill="#f9edcb" stroke="#e6ae17" stroke-width="1.1" stroke-linecap="round" stroke-linejoin="round"/><path d="M1.8 5.8h4.6l1.2-1.4" fill="none" stroke="#e6ae17" stroke-width="1.1" stroke-linecap="round" stroke-linejoin="round"/></svg>
<div class="a t" style="left:138px;top:666.6px;height:24px;line-height:24px;font-size:17.5px;color:#0c0c0d;letter-spacing:0.354px;"><span id="t53">2022</span></div>
<svg style="position:absolute;left:115px;top:701.8px;overflow:visible" width="16" height="16" viewBox="0 0 16 16" ><path d="M1.5 4a1.5 1.5 0 0 1 1.5-1.5h3l1.6 1.8H13A1.5 1.5 0 0 1 14.5 5.8v6.2A1.5 1.5 0 0 1 13 13.5H3A1.5 1.5 0 0 1 1.5 12z" fill="#f9edcb" stroke="#e6ae17" stroke-width="1.1" stroke-linecap="round" stroke-linejoin="round"/><path d="M1.8 5.8h4.6l1.2-1.4" fill="none" stroke="#e6ae17" stroke-width="1.1" stroke-linecap="round" stroke-linejoin="round"/></svg>
<div class="a t" style="left:138px;top:698.6px;height:24px;line-height:24px;font-size:17.5px;color:#0c0c0d;font-weight:bold;letter-spacing:0.354px;"><span id="t54">2023</span></div>
<div class="a" style="left:399px;top:700px;width:25px;height:20px;background:#6c6b78;border-radius:10px;"></div>
<div class="a t" style="left:399px;top:698.5px;height:24px;line-height:24px;font-size:14.5px;color:#fff;font-weight:bold;width:25px;text-align:center;"><span id="t55">15</span></div>
<svg style="position:absolute;left:115px;top:733.8px;overflow:visible" width="16" height="16" viewBox="0 0 16 16" ><path d="M1.5 4a1.5 1.5 0 0 1 1.5-1.5h3l1.6 1.8H13A1.5 1.5 0 0 1 14.5 5.8v6.2A1.5 1.5 0 0 1 13 13.5H3A1.5 1.5 0 0 1 1.5 12z" fill="#f9edcb" stroke="#e6ae17" stroke-width="1.1" stroke-linecap="round" stroke-linejoin="round"/><path d="M1.8 5.8h4.6l1.2-1.4" fill="none" stroke="#e6ae17" stroke-width="1.1" stroke-linecap="round" stroke-linejoin="round"/></svg>
<div class="a t" style="left:138px;top:730.6px;height:24px;line-height:24px;font-size:17.5px;color:#0c0c0d;letter-spacing:0.354px;"><span id="t56">2024</span></div>
<svg style="position:absolute;left:99px;top:765.8px;overflow:visible" width="16" height="16" viewBox="0 0 16 16" ><path d="M1.5 4a1.5 1.5 0 0 1 1.5-1.5h3l1.6 1.8H13A1.5 1.5 0 0 1 14.5 5.8v6.2A1.5 1.5 0 0 1 13 13.5H3A1.5 1.5 0 0 1 1.5 12z" fill="#f9edcb" stroke="#e6ae17" stroke-width="1.1" stroke-linecap="round" stroke-linejoin="round"/><path d="M1.8 5.8h4.6l1.2-1.4" fill="none" stroke="#e6ae17" stroke-width="1.1" stroke-linecap="round" stroke-linejoin="round"/></svg>
<div class="a t" style="left:122px;top:762.6px;height:24px;line-height:24px;font-size:17.5px;color:#0c0c0d;letter-spacing:-0.076px;"><span id="t57">Envoyé</span></div>
<svg style="position:absolute;left:99px;top:797.8px;overflow:visible" width="16" height="16" viewBox="0 0 16 16" ><path d="M1.5 4a1.5 1.5 0 0 1 1.5-1.5h3l1.6 1.8H13A1.5 1.5 0 0 1 14.5 5.8v6.2A1.5 1.5 0 0 1 13 13.5H3A1.5 1.5 0 0 1 1.5 12z" fill="#f9edcb" stroke="#e6ae17" stroke-width="1.1" stroke-linecap="round" stroke-linejoin="round"/><path d="M1.8 5.8h4.6l1.2-1.4" fill="none" stroke="#e6ae17" stroke-width="1.1" stroke-linecap="round" stroke-linejoin="round"/></svg>
<div class="a t" style="left:122px;top:794.6px;height:24px;line-height:24px;font-size:17.5px;color:#0c0c0d;letter-spacing:0.554px;"><span id="t58">Poubelle</span></div>
<svg style="position:absolute;left:99px;top:829.8px;overflow:visible" width="16" height="16" viewBox="0 0 16 16" ><path d="M1.5 4a1.5 1.5 0 0 1 1.5-1.5h3l1.6 1.8H13A1.5 1.5 0 0 1 14.5 5.8v6.2A1.5 1.5 0 0 1 13 13.5H3A1.5 1.5 0 0 1 1.5 12z" fill="#f9edcb" stroke="#e6ae17" stroke-width="1.1" stroke-linecap="round" stroke-linejoin="round"/><path d="M1.8 5.8h4.6l1.2-1.4" fill="none" stroke="#e6ae17" stroke-width="1.1" stroke-linecap="round" stroke-linejoin="round"/></svg>
<div class="a t" style="left:122px;top:826.6px;height:24px;line-height:24px;font-size:17.5px;color:#0c0c0d;letter-spacing:0.492px;"><span id="t59">Pourriels</span></div>
<svg style="position:absolute;left:65px;top:863px;overflow:visible" width="14" height="14" viewBox="0 0 16 16" ><path d="M3 5.5 8 10.5l5-5" fill="none" stroke="#2a2a30" stroke-width="1.25" stroke-linecap="round" stroke-linejoin="round"/></svg>
<svg style="position:absolute;left:83px;top:861.8px;overflow:visible" width="16" height="16" viewBox="0 0 16 16" ><path d="M1.5 4a1.5 1.5 0 0 1 1.5-1.5h3l1.6 1.8H13A1.5 1.5 0 0 1 14.5 5.8v6.2A1.5 1.5 0 0 1 13 13.5H3A1.5 1.5 0 0 1 1.5 12z" fill="#cfe4fb" stroke="#1373d9" stroke-width="1.1" stroke-linecap="round" stroke-linejoin="round"/><path d="M1.8 5.8h4.6l1.2-1.4" fill="none" stroke="#1373d9" stroke-width="1.1" stroke-linecap="round" stroke-linejoin="round"/></svg>
<div class="a t" style="left:106px;top:858.6px;height:24px;line-height:24px;font-size:17.5px;color:#0c0c0d;font-weight:bold;letter-spacing:-0.089px;"><span id="t60">Dossiers locaux</span></div>
<svg style="position:absolute;left:99px;top:893.8px;overflow:visible" width="16" height="16" viewBox="0 0 16 16" ><rect x="2.200" y="1.200" width="11.600" height="13.600" rx="2" fill="#f0defb" stroke="#a050e0" stroke-width="1.1" stroke-linecap="round" stroke-linejoin="round"/><path d="M4.800 4.500h6.400M4.800 7h6.400M4.800 9.500h4M7.500 12h3.700" fill="none" stroke="#a050e0" stroke-width="1.1" stroke-linecap="round" stroke-linejoin="round"/></svg>
<div class="a t" style="left:122px;top:890.6px;height:24px;line-height:24px;font-size:17.5px;color:#0c0c0d;font-weight:bold;letter-spacing:0.163px;"><span id="t61">Brouillons</span></div>
<div class="a" style="left:407px;top:892px;width:17px;height:20px;background:#6c6b78;border-radius:10px;"></div>
<div class="a t" style="left:407px;top:890.5px;height:24px;line-height:24px;font-size:14.5px;color:#fff;font-weight:bold;width:17px;text-align:center;"><span id="t62">6</span></div>
<svg style="position:absolute;left:99px;top:925.8px;overflow:visible" width="16" height="16" viewBox="0 0 16 16" ><path d="M14.3 1.7 1.8 6.6l4.6 2.2 1.9 5.2z" fill="#d5f3df" stroke="#2aa35a" stroke-width="1.1" stroke-linecap="round" stroke-linejoin="round"/><path d="M14.3 1.7 6.4 8.8" fill="none" stroke="#2aa35a" stroke-width="1.1" stroke-linecap="round" stroke-linejoin="round"/></svg>
<div class="a t" style="left:122px;top:922.6px;height:24px;line-height:24px;font-size:17.5px;color:#0c0c0d;letter-spacing:-0.188px;"><span id="t63">Envoyés</span></div>
<svg style="position:absolute;left:99px;top:957.8px;overflow:visible" width="16" height="16" viewBox="0 0 16 16" ><path d="M3.2 4.5h9.6l-.7 8.6a1.5 1.5 0 0 1-1.5 1.4H5.4a1.5 1.5 0 0 1-1.5-1.4z" fill="#dcdaf0" stroke="#5e5a8a" stroke-width="1.1" stroke-linecap="round" stroke-linejoin="round"/><path d="M2 4.5h12M6 4.2V2.8a1 1 0 0 1 1-1h2a1 1 0 0 1 1 1v1.4" fill="none" stroke="#5e5a8a" stroke-width="1.1" stroke-linecap="round" stroke-linejoin="round"/><path d="M6.3 7v5M8 7v5M9.7 7v5" fill="none" stroke="#5e5a8a" stroke-width="0.935" stroke-linecap="round" stroke-linejoin="round"/></svg>
<div class="a t" style="left:122px;top:954.6px;height:24px;line-height:24px;font-size:17.5px;color:#0c0c0d;letter-spacing:0.492px;"><span id="t64">Corbeille</span></div>
<svg style="position:absolute;left:99px;top:989.8px;overflow:visible" width="16" height="16" viewBox="0 0 16 16" ><path d="M14.5 7V3.8A1.8 1.8 0 0 0 12.7 2H3.3A1.8 1.8 0 0 0 1.5 3.8v8.4A1.8 1.8 0 0 0 3.3 14H7" fill="#d0f0f0" stroke="#129a9a" stroke-width="1.1" stroke-linecap="round" stroke-linejoin="round"/><path d="M1.8 8h3l.8 1.6H8M4 5.6h8M4.6 3.6h6.8" fill="none" stroke="#129a9a" stroke-width="0.9900000000000001" stroke-linecap="round" stroke-linejoin="round"/><path d="M15 8.6 8.6 11l2.4 1.1 1 2.7z" fill="#d0f0f0" stroke="#129a9a" stroke-width="1.1" stroke-linecap="round" stroke-linejoin="round"/></svg>
<div class="a t" style="left:122px;top:986.6px;height:24px;line-height:24px;font-size:17.5px;color:#0c0c0d;letter-spacing:0.363px;"><span id="t65">Messages en attente</span></div>
<div class="a" style="left:437px;top:128px;width:1214px;height:48px;background:#f8f8f9;"></div>
<div class="a t" style="left:446px;top:138.5px;height:30px;line-height:30px;font-size:21.5px;color:#2a2a2e;font-weight:bold;letter-spacing:0.288px;"><span id="t66">Courrier entrant</span></div>
<div class="a t" style="left:630px;top:141.0px;height:24px;line-height:24px;font-size:17.5px;color:#2a2a2e;letter-spacing:-0.011px;"><span id="t67">10 749 messages</span></div>
<div class="a" style="left:437px;top:176px;width:1214px;height:1px;background:#d6d6da;"></div>
<div class="a" style="left:437px;top:177px;width:1214px;height:47px;background:#f8f8f9;"></div>
<div class="a" style="left:443px;top:183px;width:33px;height:34.5px;background:#e2e2e6;border:1px solid #b9b9bf;border-radius:3px;"></div>
<div class="a" style="left:449.5px;top:193.5px;width:3.5px;height:13px;background:#d4d4d8;border:1px solid #b0b0b6;border-radius:2px;"></div>
<svg style="position:absolute;left:455px;top:192px;overflow:visible" width="15" height="15" viewBox="0 0 16 16" ><path d="M9.8 1.8 14.2 6.2l-1.3.5-2 2 .3 3.2-1.3 1.3L6.5 9.6 2 14l4.4-4.5L3 6.1l1.3-1.3 3.2.3 2-2z" fill="#a8a8ac" stroke="#2a2930" stroke-width="1.0" stroke-linecap="round" stroke-linejoin="round"/></svg>
<div class="a" style="left:482px;top:183px;width:450px;height:34.5px;background:#f0f0f2;border:1px solid #a9a9af;border-radius:3px;"></div>
<svg style="position:absolute;left:488px;top:193px;overflow:visible" width="14" height="14" viewBox="0 0 16 16" ><circle cx="9.2" cy="6.8" r="4.6" fill="none" stroke="#8a8a92" stroke-width="1.2" stroke-linecap="round" stroke-linejoin="round"/><path d="M5.8 10.2 1.8 14.2" fill="none" stroke="#8a8a92" stroke-width="1.2" stroke-linecap="round" stroke-linejoin="round"/></svg>
<div class="a t" style="left:507px;top:188.5px;height:24px;line-height:24px;font-size:17.5px;color:#8f8f96;letter-spacing:0.210px;"><span id="t68">Filtrer ces messages &lt;Ctrl+Maj+K&gt;</span></div>
<div class="a" style="left:938px;top:183px;width:597px;height:34.5px;background:#e4e4e7;border:1px solid #c3c3c8;border-radius:3px;"></div>
<div class="a" style="left:1043px;top:185px;width:1px;height:31px;background:#c3c3c8;"></div>
<div class="a" style="left:1134px;top:185px;width:1px;height:31px;background:#c3c3c8;"></div>
<div class="a" style="left:1250px;top:185px;width:1px;height:31px;background:#c3c3c8;"></div>
<div class="a" style="left:1379px;top:185px;width:1px;height:31px;background:#c3c3c8;"></div>
<div class="a" style="left:943.5px;top:193.5px;width:3.5px;height:13px;background:#dcdce0;border:1px solid #b4b4ba;border-radius:2px;"></div>
<svg style="position:absolute;left:948px;top:192px;overflow:visible" width="16" height="16" viewBox="0 0 16 16" ><rect x="3" y="4" width="12" height="9.5" rx="1.8" fill="#b0b0b4" stroke="#2a2930" stroke-width="1.0" stroke-linecap="round" stroke-linejoin="round"/><path d="M3.6 5 9 9.6 14.4 5M3.6 12.8l3.6-3.8M14.4 12.8 10.8 9" fill="none" stroke="#2a2930" stroke-width="1.0" stroke-linecap="round" stroke-linejoin="round"/><circle cx="3" cy="4" r="2" fill="#2a2930" stroke="none"/></svg>
<div class="a t" style="left:970px;top:188.5px;height:24px;line-height:24px;font-size:17.5px;color:#15141a;letter-spacing:0.276px;"><span id="t69">Non lus</span></div>
<div class="a" style="left:1048.5px;top:193.5px;width:3.5px;height:13px;background:#dcdce0;border:1px solid #b4b4ba;border-radius:2px;"></div>
<svg style="position:absolute;left:1054px;top:192px;overflow:visible" width="16" height="16" viewBox="0 0 16 16" ><path d="M8 1.6l1.95 4.1 4.45.6-3.25 3.1.8 4.45L8 11.7l-3.95 2.15.8-4.45L1.6 6.3l4.45-.6z" fill="#b0b0b4" stroke="#2a2930" stroke-width="1.0" stroke-linecap="round" stroke-linejoin="round"/></svg>
<div class="a t" style="left:1076px;top:188.5px;height:24px;line-height:24px;font-size:17.5px;color:#15141a;letter-spacing:-0.338px;"><span id="t70">Suivis</span></div>
<div class="a" style="left:1139.5px;top:193.5px;width:3.5px;height:13px;background:#dcdce0;border:1px solid #b4b4ba;border-radius:2px;"></div>
<svg style="position:absolute;left:1144px;top:192px;overflow:visible" width="16" height="16" viewBox="0 0 16 16" ><rect x="3" y="1.5" width="11" height="13" rx="2" fill="#b0b0b4" stroke="#2a2930" stroke-width="1.0" stroke-linecap="round" stroke-linejoin="round"/><path d="M1.5 4.5h2M1.5 8h2M1.5 11.5h2" fill="none" stroke="#2a2930" stroke-width="1.0" stroke-linecap="round" stroke-linejoin="round"/><circle cx="8.5" cy="6.3" r="2" fill="none" stroke="#2a2930" stroke-width="1.0" stroke-linecap="round" stroke-linejoin="round"/><path d="M5.3 12c.3-2 1.6-3 3.2-3s2.9 1 3.2 3" fill="none" stroke="#2a2930" stroke-width="1.0" stroke-linecap="round" stroke-linejoin="round"/></svg>
<div class="a t" style="left:1166px;top:188.5px;height:24px;line-height:24px;font-size:17.5px;color:#15141a;letter-spacing:0.275px;"><span id="t71">Contacts</span></div>
<div class="a" style="left:1255.5px;top:193.5px;width:3.5px;height:13px;background:#dcdce0;border:1px solid #b4b4ba;border-radius:2px;"></div>
<svg style="position:absolute;left:1260px;top:192px;overflow:visible" width="16" height="16" viewBox="0 0 16 16" ><path d="M8.5 2H14v5.5l-6.6 6.6a1.4 1.4 0 0 1-2 0L1.9 10.6a1.4 1.4 0 0 1 0-2z" fill="#b0b0b4" stroke="#2a2930" stroke-width="1.0" stroke-linecap="round" stroke-linejoin="round"/><circle cx="11.2" cy="4.8" r="1" fill="none" stroke="#2a2930" stroke-width="1.0" stroke-linecap="round" stroke-linejoin="round"/></svg>
<div class="a t" style="left:1282px;top:188.5px;height:24px;line-height:24px;font-size:17.5px;color:#15141a;letter-spacing:0.686px;"><span id="t72">Étiquettes</span></div>
<div class="a" style="left:1384.5px;top:193.5px;width:3.5px;height:13px;background:#dcdce0;border:1px solid #b4b4ba;border-radius:2px;"></div>
<svg style="position:absolute;left:1390px;top:192px;overflow:visible" width="16" height="16" viewBox="0 0 16 16" ><path d="M5 6.5V10.8a3 3 0 0 0 6 0V4.5a2 2 0 0 0-4 0v6a1 1 0 0 0 2 0V5.5" fill="none" stroke="#2a2930" stroke-width="1.0" stroke-linecap="round" stroke-linejoin="round"/></svg>
<div class="a t" style="left:1411px;top:188.5px;height:24px;line-height:24px;font-size:17.5px;color:#15141a;letter-spacing:0.232px;"><span id="t73">Pièces jointes</span></div>
<div class="a" style="left:437px;top:224px;width:1214px;height:1px;background:#b9b9be;"></div>
<div class="a" style="left:437px;top:225px;width:1214px;height:36px;background:#ffffff;"></div>
<div class="a" style="left:469px;top:228px;width:1px;height:30px;background:#a9a9b0;"></div>
<div class="a" style="left:502px;top:228px;width:1px;height:30px;background:#a9a9b0;"></div>
<div class="a" style="left:535px;top:228px;width:1px;height:30px;background:#a9a9b0;"></div>
<div class="a" style="left:974px;top:228px;width:1px;height:30px;background:#a9a9b0;"></div>
<div class="a" style="left:1007px;top:228px;width:1px;height:30px;background:#a9a9b0;"></div>
<div class="a" style="left:1261px;top:228px;width:1px;height:30px;background:#a9a9b0;"></div>
<div class="a" style="left:1294px;top:228px;width:1px;height:30px;background:#a9a9b0;"></div>
<div class="a" style="left:1431px;top:228px;width:1px;height:30px;background:#a9a9b0;"></div>
<div class="a" style="left:1488px;top:228px;width:1px;height:30px;background:#a9a9b0;"></div>
<div class="a" style="left:1613px;top:228px;width:1px;height:30px;background:#a9a9b0;"></div>
<svg style="position:absolute;left:448px;top:237px;overflow:visible" width="13" height="13" viewBox="0 0 16 16" ><circle cx="4" cy="3" r="1.4" fill="none" stroke="#17163a" stroke-width="1.3" stroke-linecap="round" stroke-linejoin="round"/><circle cx="11.5" cy="8.5" r="1.4" fill="none" stroke="#17163a" stroke-width="1.3" stroke-linecap="round" stroke-linejoin="round"/><circle cx="11.5" cy="13" r="1.4" fill="none" stroke="#17163a" stroke-width="1.3" stroke-linecap="round" stroke-linejoin="round"/><path d="M4 4.5V11a2 2 0 0 0 2 2h4M4 8.5h6" fill="none" stroke="#17163a" stroke-width="1.3" stroke-linecap="round" stroke-linejoin="round"/></svg>
<svg style="position:absolute;left:480px;top:237px;overflow:visible" width="13" height="13" viewBox="0 0 16 16" ><path d="M8 1.6l1.95 4.1 4.45.6-3.25 3.1.8 4.45L8 11.7l-3.95 2.15.8-4.45L1.6 6.3l4.45-.6z" fill="#b9b9c4" stroke="#17163a" stroke-width="1.3" stroke-linecap="round" stroke-linejoin="round"/></svg>
<svg style="position:absolute;left:513px;top:236px;overflow:visible" width="14" height="14" viewBox="0 0 16 16" ><path d="M5 6.5V10.8a3 3 0 0 0 6 0V4.5a2 2 0 0 0-4 0v6a1 1 0 0 0 2 0V5.5" fill="none" stroke="#17163a" stroke-width="1.4" stroke-linecap="round" stroke-linejoin="round"/></svg>
<div class="a t" style="left:555px;top:231.5px;height:24px;line-height:24px;font-size:17.5px;color:#17163a;letter-spacing:0.277px;"><span id="t74">Sujet</span></div>
<svg style="position:absolute;left:984px;top:237px;overflow:visible" width="13" height="13" viewBox="0 0 16 16" ><rect x="3" y="4" width="12" height="9.5" rx="1.8" fill="none" stroke="#17163a" stroke-width="1.3" stroke-linecap="round" stroke-linejoin="round"/><path d="M3.6 5 9 9.6 14.4 5M3.6 12.8l3.6-3.8M14.4 12.8 10.8 9" fill="none" stroke="#17163a" stroke-width="1.3" stroke-linecap="round" stroke-linejoin="round"/><circle cx="3" cy="4" r="2" fill="#17163a" stroke="none"/></svg>
<div class="a t" style="left:1035px;top:231.5px;height:24px;line-height:24px;font-size:17.5px;color:#17163a;letter-spacing:0.421px;"><span id="t75">Correspondants</span></div>
<svg style="position:absolute;left:1270.5px;top:236.5px;overflow:visible" width="14" height="14" viewBox="0 0 16 16" ><path d="M8.500 1.300C10.700 3.200 12.800 5.700 12.800 9.300c0 3.200-1.700 5.100-3.100 5.600 .4-1.300 0-3-1.700-4-1.700 1-2.100 2.700-1.700 4C4.900 14.400 3.200 12.500 3.200 9.600c0-2.100 1-3.600 1.900-4.400 .2 1.200 .8 2 1.600 2.200C8 6.200 8.600 3.600 8.500 1.300z" fill="#b9b9c4" fill-opacity="1" stroke="#17163a" stroke-width="1.2" stroke-linejoin="round"/></svg>
<div class="a t" style="left:1301px;top:231.5px;height:24px;line-height:24px;font-size:17.5px;color:#17163a;letter-spacing:0.344px;"><span id="t76">Date</span></div>
<div class="a t" style="left:1439px;top:231.5px;height:24px;line-height:24px;font-size:17.5px;color:#17163a;letter-spacing:-0.495px;"><span id="t77">Ta…</span></div>
<div class="a t" style="left:1496px;top:231.5px;height:24px;line-height:24px;font-size:17.5px;color:#17163a;letter-spacing:-0.620px;"><span id="t78">Reçu</span></div>
<svg style="position:absolute;left:1595px;top:237px;overflow:visible" width="13" height="13" viewBox="0 0 16 16" ><path d="M3 10.5 8 5.5l5 5" fill="none" stroke="#17163a" stroke-width="1.3" stroke-linecap="round" stroke-linejoin="round"/></svg>
<svg style="position:absolute;left:1619px;top:236px;overflow:visible" width="14" height="14" viewBox="0 0 16 16" ><rect x="1.500" y="2.500" width="12" height="10.500" rx="1.800" fill="none" stroke="#17163a" stroke-width="1.2" stroke-linecap="round" stroke-linejoin="round"/><path d="M1.500 6h12M5.500 2.500v10.500M9.500 2.500v6" fill="none" stroke="#17163a" stroke-width="1.2" stroke-linecap="round" stroke-linejoin="round"/><rect x="8.500" y="9.300" width="7.500" height="6" fill="#ffffff"/><path d="M9.300 10.200h6.200l-3.100 4z" fill="#17163a"/></svg>
<div class="a" style="left:437px;top:262px;width:1214px;height:371px;background:#ffffff;"></div>
<div class="a" style="left:437px;top:261px;width:1214px;height:372px;overflow:hidden;">
<div class="a" style="left:0px;top:0px;width:1214px;height:32px;background:#e1effc;"></div>
<svg style="position:absolute;left:41px;top:7.1px;overflow:visible" width="18" height="18" viewBox="0 0 16 16" ><path d="M8 1.6l1.95 4.1 4.45.6-3.25 3.1.8 4.45L8 11.7l-3.95 2.15.8-4.45L1.6 6.3l4.45-.6z" fill="#f1f1f5" stroke="#bcbcc6" stroke-width="1.0" stroke-linecap="round" stroke-linejoin="round"/></svg>
<div class="a t" style="left:118px;top:4.5px;height:24px;line-height:24px;font-size:17.5px;color:#17163a;letter-spacing:0.225px;"><span id="t79">David Lep0le, explore Cambridge Judge Business…</span></div>
<div class="a" style="left:550px;top:11.75px;width:8px;height:8px;border-radius:4px;background:#ececf1;border:1.5px solid #c8c8d0;"></div>
<div class="a t" style="left:598px;top:4.5px;height:24px;line-height:24px;font-size:17.5px;color:#17163a;letter-spacing:0.329px;"><span id="t80">Emeritus on behalf of Ca…</span></div>
<svg style="position:absolute;left:832.25px;top:7.15px;overflow:visible" width="16.5" height="16.5" viewBox="0 0 16 16" ><path d="M8.500 1.300C10.700 3.200 12.800 5.700 12.800 9.300c0 3.200-1.700 5.100-3.100 5.600 .4-1.300 0-3-1.700-4-1.700 1-2.100 2.700-1.700 4C4.900 14.400 3.200 12.500 3.200 9.600c0-2.100 1-3.600 1.900-4.400 .2 1.200 .8 2 1.600 2.200C8 6.200 8.600 3.600 8.500 1.300z" fill="#ececf1" fill-opacity="1" stroke="#cfcfd8" stroke-width="1.05" stroke-linejoin="round"/></svg>
<div class="a t" style="left:864px;top:4.5px;height:24px;line-height:24px;font-size:17.5px;color:#17163a;letter-spacing:0.048px;"><span id="t81">01:03</span></div>
<div class="a t" style="left:1002px;top:4.5px;height:24px;line-height:24px;font-size:17.5px;color:#17163a;letter-spacing:0.056px;"><span id="t82">56,…</span></div>
<div class="a t" style="left:1059px;top:4.5px;height:24px;line-height:24px;font-size:17.5px;color:#17163a;letter-spacing:0.048px;"><span id="t83">01:03</span></div>
<div class="a" style="left:0px;top:32px;width:1214px;height:32px;background:#6ca8e8;border:1px solid #5fa0e6;border-left:0;border-right:0;"></div>
<svg style="position:absolute;left:41px;top:39.1px;overflow:visible" width="18" height="18" viewBox="0 0 16 16" ><path d="M8 1.6l1.95 4.1 4.45.6-3.25 3.1.8 4.45L8 11.7l-3.95 2.15.8-4.45L1.6 6.3l4.45-.6z" fill="#a4c9f1" stroke="#ffffff" stroke-width="1.0" stroke-linecap="round" stroke-linejoin="round"/></svg>
<div class="a t" style="left:118px;top:36.5px;height:24px;line-height:24px;font-size:17.5px;color:#ffffff;letter-spacing:1.261px;"><span id="t84">test</span></div>
<div class="a" style="left:550px;top:43.75px;width:8px;height:8px;border-radius:4px;background:#6ba8e7;border:1.5px solid #ffffff;"></div>
<div class="a t" style="left:598px;top:36.5px;height:24px;line-height:24px;font-size:17.5px;color:#ffffff;letter-spacing:0.764px;"><span id="t85">developpement@tntb.n…</span></div>
<svg style="position:absolute;left:832.25px;top:39.15px;overflow:visible" width="16.5" height="16.5" viewBox="0 0 16 16" ><path d="M8.500 1.300C10.700 3.200 12.800 5.700 12.800 9.300c0 3.200-1.700 5.100-3.100 5.600 .4-1.300 0-3-1.700-4-1.700 1-2.100 2.700-1.700 4C4.900 14.400 3.200 12.500 3.200 9.600c0-2.100 1-3.600 1.900-4.400 .2 1.200 .8 2 1.600 2.200C8 6.200 8.600 3.600 8.500 1.300z" fill="#ffffff" fill-opacity="0.35" stroke="#eef5fd" stroke-width="1.05" stroke-linejoin="round"/></svg>
<div class="a t" style="left:864px;top:36.5px;height:24px;line-height:24px;font-size:17.5px;color:#ffffff;letter-spacing:0.549px;"><span id="t86">03/06/2025 …</span></div>
<div class="a t" style="left:1002px;top:36.5px;height:24px;line-height:24px;font-size:17.5px;color:#ffffff;letter-spacing:0.056px;"><span id="t87">1,5…</span></div>
<div class="a t" style="left:1059px;top:36.5px;height:24px;line-height:24px;font-size:17.5px;color:#ffffff;letter-spacing:0.450px;"><span id="t88">03/06/2025 21:45</span></div>
<svg style="position:absolute;left:41px;top:71.1px;overflow:visible" width="18" height="18" viewBox="0 0 16 16" ><path d="M8 1.6l1.95 4.1 4.45.6-3.25 3.1.8 4.45L8 11.7l-3.95 2.15.8-4.45L1.6 6.3l4.45-.6z" fill="#f1f1f5" stroke="#bcbcc6" stroke-width="1.0" stroke-linecap="round" stroke-linejoin="round"/></svg>
<div class="a t" style="left:118px;top:68.5px;height:24px;line-height:24px;font-size:17.5px;color:#17163a;letter-spacing:0.343px;"><span id="t89">Deal du jour : les dernières technologies</span></div>
<div class="a" style="left:550px;top:75.75px;width:8px;height:8px;border-radius:4px;background:#ececf1;border:1.5px solid #c8c8d0;"></div>
<div class="a t" style="left:598px;top:68.5px;height:24px;line-height:24px;font-size:17.5px;color:#17163a;letter-spacing:0.148px;"><span id="t90">AliExpress</span></div>
<svg style="position:absolute;left:832.25px;top:71.15px;overflow:visible" width="16.5" height="16.5" viewBox="0 0 16 16" ><path d="M8.500 1.300C10.700 3.200 12.800 5.700 12.800 9.300c0 3.200-1.700 5.100-3.100 5.600 .4-1.300 0-3-1.700-4-1.700 1-2.100 2.700-1.700 4C4.900 14.400 3.200 12.500 3.200 9.600c0-2.100 1-3.600 1.900-4.400 .2 1.200 .8 2 1.600 2.200C8 6.200 8.600 3.600 8.500 1.300z" fill="#ececf1" fill-opacity="1" stroke="#cfcfd8" stroke-width="1.05" stroke-linejoin="round"/></svg>
<div class="a t" style="left:864px;top:68.5px;height:24px;line-height:24px;font-size:17.5px;color:#17163a;letter-spacing:0.549px;"><span id="t91">03/06/2025 …</span></div>
<div class="a t" style="left:1002px;top:68.5px;height:24px;line-height:24px;font-size:17.5px;color:#17163a;letter-spacing:0.016px;"><span id="t92">10…</span></div>
<div class="a t" style="left:1059px;top:68.5px;height:24px;line-height:24px;font-size:17.5px;color:#17163a;letter-spacing:0.450px;"><span id="t93">03/06/2025 20:32</span></div>
<svg style="position:absolute;left:41px;top:103.1px;overflow:visible" width="18" height="18" viewBox="0 0 16 16" ><path d="M8 1.6l1.95 4.1 4.45.6-3.25 3.1.8 4.45L8 11.7l-3.95 2.15.8-4.45L1.6 6.3l4.45-.6z" fill="#f1f1f5" stroke="#bcbcc6" stroke-width="1.0" stroke-linecap="round" stroke-linejoin="round"/></svg>
<div class="a t" style="left:118px;top:100.5px;height:24px;line-height:24px;font-size:17.5px;color:#17163a;font-weight:bold;letter-spacing:0.189px;"><span id="t94">Nouvelle annonce de eurydice</span></div>
<div class="a" style="left:549.5px;top:107.25px;width:9px;height:9px;border-radius:5px;background:#3fae6a;border:1.5px solid #9fdcb8;"></div>
<div class="a t" style="left:598px;top:100.5px;height:24px;line-height:24px;font-size:17.5px;color:#17163a;font-weight:bold;letter-spacing:0.045px;"><span id="t95">leboncoin</span></div>
<svg style="position:absolute;left:832.25px;top:103.15px;overflow:visible" width="16.5" height="16.5" viewBox="0 0 16 16" ><path d="M8.500 1.300C10.700 3.200 12.800 5.700 12.800 9.300c0 3.200-1.700 5.100-3.100 5.600 .4-1.300 0-3-1.700-4-1.700 1-2.100 2.700-1.700 4C4.900 14.400 3.200 12.500 3.200 9.600c0-2.100 1-3.600 1.900-4.400 .2 1.200 .8 2 1.600 2.200C8 6.200 8.600 3.600 8.500 1.300z" fill="#ececf1" fill-opacity="1" stroke="#cfcfd8" stroke-width="1.05" stroke-linejoin="round"/></svg>
<div class="a t" style="left:864px;top:100.5px;height:24px;line-height:24px;font-size:17.5px;color:#17163a;font-weight:bold;letter-spacing:0.823px;"><span id="t96">03/06/2025 …</span></div>
<div class="a t" style="left:1002px;top:100.5px;height:24px;line-height:24px;font-size:17.5px;color:#17163a;font-weight:bold;letter-spacing:0.390px;"><span id="t97">61,…</span></div>
<div class="a t" style="left:1059px;top:100.5px;height:24px;line-height:24px;font-size:17.5px;color:#17163a;font-weight:bold;letter-spacing:0.585px;"><span id="t98">03/06/2025 19:32</span></div>
<svg style="position:absolute;left:41px;top:135.1px;overflow:visible" width="18" height="18" viewBox="0 0 16 16" ><path d="M8 1.6l1.95 4.1 4.45.6-3.25 3.1.8 4.45L8 11.7l-3.95 2.15.8-4.45L1.6 6.3l4.45-.6z" fill="#f1f1f5" stroke="#bcbcc6" stroke-width="1.0" stroke-linecap="round" stroke-linejoin="round"/></svg>
<div class="a t" style="left:118px;top:132.5px;height:24px;line-height:24px;font-size:17.5px;color:#17163a;font-weight:bold;letter-spacing:0.272px;"><span id="t99">Immobilier : un printemps en demi-teinte</span></div>
<div class="a" style="left:549.5px;top:139.25px;width:9px;height:9px;border-radius:5px;background:#3fae6a;border:1.5px solid #9fdcb8;"></div>
<div class="a t" style="left:598px;top:132.5px;height:24px;line-height:24px;font-size:17.5px;color:#17163a;font-weight:bold;letter-spacing:0.287px;"><span id="t100">Léa de Meilleurs Agents</span></div>
<svg style="position:absolute;left:832.25px;top:135.15px;overflow:visible" width="16.5" height="16.5" viewBox="0 0 16 16" ><path d="M8.500 1.300C10.700 3.200 12.800 5.700 12.800 9.300c0 3.200-1.700 5.100-3.100 5.600 .4-1.300 0-3-1.700-4-1.700 1-2.100 2.700-1.700 4C4.900 14.400 3.200 12.500 3.200 9.600c0-2.100 1-3.600 1.900-4.400 .2 1.200 .8 2 1.600 2.200C8 6.200 8.600 3.600 8.500 1.300z" fill="#ececf1" fill-opacity="1" stroke="#cfcfd8" stroke-width="1.05" stroke-linejoin="round"/></svg>
<div class="a t" style="left:864px;top:132.5px;height:24px;line-height:24px;font-size:17.5px;color:#17163a;font-weight:bold;letter-spacing:0.823px;"><span id="t101">03/06/2025 …</span></div>
<div class="a t" style="left:1002px;top:132.5px;height:24px;line-height:24px;font-size:17.5px;color:#17163a;font-weight:bold;letter-spacing:0.390px;"><span id="t102">94,…</span></div>
<div class="a t" style="left:1059px;top:132.5px;height:24px;line-height:24px;font-size:17.5px;color:#17163a;font-weight:bold;letter-spacing:0.585px;"><span id="t103">03/06/2025 18:06</span></div>
<svg style="position:absolute;left:41px;top:167.1px;overflow:visible" width="18" height="18" viewBox="0 0 16 16" ><path d="M8 1.6l1.95 4.1 4.45.6-3.25 3.1.8 4.45L8 11.7l-3.95 2.15.8-4.45L1.6 6.3l4.45-.6z" fill="#f1f1f5" stroke="#bcbcc6" stroke-width="1.0" stroke-linecap="round" stroke-linejoin="round"/></svg>
<div class="a t" style="left:118px;top:164.5px;height:24px;line-height:24px;font-size:17.5px;color:#17163a;font-weight:bold;letter-spacing:0.196px;"><span id="t104">Réveillons l&#x27;artiste qui est en nous</span></div>
<svg class="a" style="left:416px;top:166.5px" width="20" height="20" viewBox="0 0 20 20"><path d="M1 19 7 5l8 8z" fill="#dd2e44"/><path d="M1 19 3.600 13l3.600 3.500z" fill="#ea596e"/><path d="M5 9l6 6" stroke="#f4900c" stroke-width="1.500"/><circle cx="14" cy="3" r="1.400" fill="#5c913b"/><circle cx="18" cy="9" r="1.200" fill="#ffcc4d"/><path d="M11 2l1.500 3M17 13l2 1M16 5l2-2.500M9 1l.5 2" stroke="#9266cc" stroke-width="1.400"/><path d="M13 8c2-1 3-3 2-5" stroke="#5c913b" stroke-width="1.200" fill="none"/></svg>
<div class="a" style="left:549.5px;top:171.25px;width:9px;height:9px;border-radius:5px;background:#3fae6a;border:1.5px solid #9fdcb8;"></div>
<div class="a t" style="left:598px;top:164.5px;height:24px;line-height:24px;font-size:17.5px;color:#17163a;font-weight:bold;letter-spacing:0.343px;"><span id="t105">La Verrerie - tiers-lieu c…</span></div>
<svg style="position:absolute;left:832.25px;top:167.15px;overflow:visible" width="16.5" height="16.5" viewBox="0 0 16 16" ><path d="M8.500 1.300C10.700 3.200 12.800 5.700 12.800 9.300c0 3.200-1.700 5.100-3.100 5.600 .4-1.300 0-3-1.700-4-1.700 1-2.100 2.700-1.700 4C4.900 14.400 3.200 12.500 3.200 9.600c0-2.100 1-3.600 1.900-4.400 .2 1.200 .8 2 1.600 2.200C8 6.200 8.600 3.600 8.500 1.300z" fill="#ececf1" fill-opacity="1" stroke="#cfcfd8" stroke-width="1.05" stroke-linejoin="round"/></svg>
<div class="a t" style="left:864px;top:164.5px;height:24px;line-height:24px;font-size:17.5px;color:#17163a;font-weight:bold;letter-spacing:0.823px;"><span id="t106">03/06/2025 …</span></div>
<div class="a t" style="left:1002px;top:164.5px;height:24px;line-height:24px;font-size:17.5px;color:#17163a;font-weight:bold;letter-spacing:0.516px;"><span id="t107">13…</span></div>
<div class="a t" style="left:1059px;top:164.5px;height:24px;line-height:24px;font-size:17.5px;color:#17163a;font-weight:bold;letter-spacing:0.585px;"><span id="t108">03/06/2025 17:51</span></div>
<svg style="position:absolute;left:41px;top:199.1px;overflow:visible" width="18" height="18" viewBox="0 0 16 16" ><path d="M8 1.6l1.95 4.1 4.45.6-3.25 3.1.8 4.45L8 11.7l-3.95 2.15.8-4.45L1.6 6.3l4.45-.6z" fill="#f1f1f5" stroke="#bcbcc6" stroke-width="1.0" stroke-linecap="round" stroke-linejoin="round"/></svg>
<div class="a t" style="left:118px;top:196.5px;height:24px;line-height:24px;font-size:17.5px;color:#17163a;letter-spacing:0.428px;"><span id="t109">Demande de stage pour la validation d&#x27;un projet …</span></div>
<div class="a" style="left:550px;top:203.75px;width:8px;height:8px;border-radius:4px;background:#ececf1;border:1.5px solid #c8c8d0;"></div>
<div class="a t" style="left:598px;top:196.5px;height:24px;line-height:24px;font-size:17.5px;color:#17163a;letter-spacing:0.068px;"><span id="t110">Chloé</span></div>
<svg style="position:absolute;left:832.25px;top:199.15px;overflow:visible" width="16.5" height="16.5" viewBox="0 0 16 16" ><path d="M8.500 1.300C10.700 3.200 12.800 5.700 12.800 9.300c0 3.200-1.700 5.100-3.100 5.600 .4-1.300 0-3-1.700-4-1.700 1-2.100 2.700-1.700 4C4.900 14.400 3.200 12.500 3.200 9.600c0-2.100 1-3.600 1.900-4.400 .2 1.200 .8 2 1.600 2.200C8 6.200 8.600 3.600 8.500 1.300z" fill="#ececf1" fill-opacity="1" stroke="#cfcfd8" stroke-width="1.05" stroke-linejoin="round"/></svg>
<div class="a t" style="left:864px;top:196.5px;height:24px;line-height:24px;font-size:17.5px;color:#17163a;letter-spacing:0.549px;"><span id="t111">03/06/2025 …</span></div>
<div class="a t" style="left:1002px;top:196.5px;height:24px;line-height:24px;font-size:17.5px;color:#17163a;letter-spacing:0.056px;"><span id="t112">6,8…</span></div>
<div class="a t" style="left:1059px;top:196.5px;height:24px;line-height:24px;font-size:17.5px;color:#17163a;letter-spacing:0.450px;"><span id="t113">03/06/2025 17:48</span></div>
<svg style="position:absolute;left:41px;top:231.1px;overflow:visible" width="18" height="18" viewBox="0 0 16 16" ><path d="M8 1.6l1.95 4.1 4.45.6-3.25 3.1.8 4.45L8 11.7l-3.95 2.15.8-4.45L1.6 6.3l4.45-.6z" fill="#f1f1f5" stroke="#bcbcc6" stroke-width="1.0" stroke-linecap="round" stroke-linejoin="round"/></svg>
<div class="a t" style="left:118px;top:228.5px;height:24px;line-height:24px;font-size:17.5px;color:#17163a;font-weight:bold;letter-spacing:0.243px;"><span id="t114">Des chaussettes à offrir</span></div>
<svg class="a" style="left:323px;top:230.5px" width="18" height="20" viewBox="0 0 18 20"><path d="M8 1h7v9l-2.500 7.500c-1 2.500-6.500 1.500-5.500-1.500l1-5z" fill="#2a6797"/><path d="M3 2h7v9l-3 7.500c-1 2.500-6.500 1-5-2l1-5z" fill="#3b88c3"/><path d="M3 5h7M3 8h7" stroke="#ffcc4d" stroke-width="1.300"/><path d="M8 4h7M8.500 7H15" stroke="#78b159" stroke-width="1.200"/></svg>
<svg class="a" style="left:341px;top:230.5px" width="18" height="20" viewBox="0 0 18 20"><rect x="1.500" y="7" width="15" height="12" rx="1" fill="#fdd888"/><rect x="0.500" y="4.500" width="17" height="5" rx="1" fill="#ffcc4d"/><rect x="7" y="4.500" width="4" height="14.500" fill="#dd2e44"/><path d="M9 4.500C5 -1 1.500 3.500 9 4.500 16.500 3.500 13 -1 9 4.500z" fill="#dd2e44"/></svg>
<div class="a" style="left:549.5px;top:235.25px;width:9px;height:9px;border-radius:5px;background:#3fae6a;border:1.5px solid #9fdcb8;"></div>
<div class="a t" style="left:598px;top:228.5px;height:24px;line-height:24px;font-size:17.5px;color:#17163a;font-weight:bold;letter-spacing:0.145px;"><span id="t115">Desmazieres Drino Bon…</span></div>
<svg style="position:absolute;left:832.25px;top:231.15px;overflow:visible" width="16.5" height="16.5" viewBox="0 0 16 16" ><path d="M8.500 1.300C10.700 3.200 12.800 5.700 12.800 9.300c0 3.200-1.700 5.100-3.100 5.600 .4-1.300 0-3-1.700-4-1.700 1-2.100 2.700-1.700 4C4.900 14.400 3.200 12.500 3.200 9.600c0-2.100 1-3.600 1.900-4.400 .2 1.200 .8 2 1.600 2.200C8 6.200 8.600 3.600 8.500 1.300z" fill="#ececf1" fill-opacity="1" stroke="#cfcfd8" stroke-width="1.05" stroke-linejoin="round"/></svg>
<div class="a t" style="left:864px;top:228.5px;height:24px;line-height:24px;font-size:17.5px;color:#17163a;font-weight:bold;letter-spacing:0.823px;"><span id="t116">03/06/2025 …</span></div>
<div class="a t" style="left:1002px;top:228.5px;height:24px;line-height:24px;font-size:17.5px;color:#17163a;font-weight:bold;letter-spacing:0.390px;"><span id="t117">19,…</span></div>
<div class="a t" style="left:1059px;top:228.5px;height:24px;line-height:24px;font-size:17.5px;color:#17163a;font-weight:bold;letter-spacing:0.585px;"><span id="t118">03/06/2025 17:16</span></div>
<svg style="position:absolute;left:41px;top:263.1px;overflow:visible" width="18" height="18" viewBox="0 0 16 16" ><path d="M8 1.6l1.95 4.1 4.45.6-3.25 3.1.8 4.45L8 11.7l-3.95 2.15.8-4.45L1.6 6.3l4.45-.6z" fill="#f1f1f5" stroke="#bcbcc6" stroke-width="1.0" stroke-linecap="round" stroke-linejoin="round"/></svg>
<div class="a t" style="left:118px;top:260.5px;height:24px;line-height:24px;font-size:17.5px;color:#17163a;font-weight:bold;letter-spacing:-0.277px;"><span id="t119">Fwd:</span></div>
<svg class="a" style="left:161px;top:262.5px" width="19" height="20" viewBox="0 0 19 20"><rect x="0.500" y="7" width="18" height="12" rx="1.500" fill="#ccd6dd"/><path d="M1 8 9.500 14.500 18 8" stroke="#99aab5" fill="none"/><path d="M1 18.500l6-5.500M18 18.500 12 13" stroke="#99aab5" fill="none"/><path d="M9.500 0v8" stroke="#3b88c3" stroke-width="3.600" fill="none"/><path d="M5 5.500 9.500 10.500 14 5.500z" fill="#3b88c3"/></svg>
<div class="a t" style="left:184.5px;top:260.5px;height:24px;line-height:24px;font-size:17.5px;color:#17163a;font-weight:bold;letter-spacing:0.206px;"><span id="t120">Invitation à l&#x27;Assemblée Générale du G…</span></div>
<div class="a" style="left:549.5px;top:267.25px;width:9px;height:9px;border-radius:5px;background:#3fae6a;border:1.5px solid #9fdcb8;"></div>
<div class="a t" style="left:598px;top:260.5px;height:24px;line-height:24px;font-size:17.5px;color:#17163a;font-weight:bold;letter-spacing:0.110px;"><span id="t121">GE Partage 30</span></div>
<svg style="position:absolute;left:832.25px;top:263.15px;overflow:visible" width="16.5" height="16.5" viewBox="0 0 16 16" ><path d="M8.500 1.300C10.700 3.200 12.800 5.700 12.800 9.300c0 3.200-1.700 5.100-3.100 5.600 .4-1.300 0-3-1.700-4-1.700 1-2.100 2.700-1.700 4C4.900 14.400 3.200 12.500 3.200 9.600c0-2.100 1-3.600 1.900-4.400 .2 1.200 .8 2 1.600 2.200C8 6.200 8.600 3.600 8.500 1.300z" fill="#ececf1" fill-opacity="1" stroke="#cfcfd8" stroke-width="1.05" stroke-linejoin="round"/></svg>
<div class="a t" style="left:864px;top:260.5px;height:24px;line-height:24px;font-size:17.5px;color:#17163a;font-weight:bold;letter-spacing:0.823px;"><span id="t122">03/06/2025 …</span></div>
<div class="a t" style="left:1002px;top:260.5px;height:24px;line-height:24px;font-size:17.5px;color:#17163a;font-weight:bold;letter-spacing:0.387px;"><span id="t123">97,…</span></div>
<div class="a t" style="left:1059px;top:260.5px;height:24px;line-height:24px;font-size:17.5px;color:#17163a;font-weight:bold;letter-spacing:0.585px;"><span id="t124">03/06/2025 16:47</span></div>
<svg style="position:absolute;left:41px;top:295.1px;overflow:visible" width="18" height="18" viewBox="0 0 16 16" ><path d="M8 1.6l1.95 4.1 4.45.6-3.25 3.1.8 4.45L8 11.7l-3.95 2.15.8-4.45L1.6 6.3l4.45-.6z" fill="#f1f1f5" stroke="#bcbcc6" stroke-width="1.0" stroke-linecap="round" stroke-linejoin="round"/></svg>
<div class="a t" style="left:118px;top:292.5px;height:24px;line-height:24px;font-size:17.5px;color:#17163a;font-weight:bold;letter-spacing:0.206px;"><span id="t125">Re: Site internet - Compagnie Aurelia</span></div>
<div class="a" style="left:549.5px;top:299.25px;width:9px;height:9px;border-radius:5px;background:#3fae6a;border:1.5px solid #9fdcb8;"></div>
<div class="a t" style="left:598px;top:292.5px;height:24px;line-height:24px;font-size:17.5px;color:#17163a;font-weight:bold;letter-spacing:0.182px;"><span id="t126">Charles Binet</span></div>
<svg style="position:absolute;left:832.25px;top:295.15px;overflow:visible" width="16.5" height="16.5" viewBox="0 0 16 16" ><path d="M8.500 1.300C10.700 3.200 12.800 5.700 12.800 9.300c0 3.200-1.700 5.100-3.100 5.600 .4-1.300 0-3-1.700-4-1.700 1-2.100 2.700-1.700 4C4.900 14.400 3.200 12.500 3.200 9.600c0-2.100 1-3.600 1.900-4.400 .2 1.200 .8 2 1.600 2.200C8 6.200 8.600 3.600 8.500 1.300z" fill="#ececf1" fill-opacity="1" stroke="#cfcfd8" stroke-width="1.05" stroke-linejoin="round"/></svg>
<div class="a t" style="left:864px;top:292.5px;height:24px;line-height:24px;font-size:17.5px;color:#17163a;font-weight:bold;letter-spacing:0.823px;"><span id="t127">03/06/2025 …</span></div>
<div class="a t" style="left:1002px;top:292.5px;height:24px;line-height:24px;font-size:17.5px;color:#17163a;font-weight:bold;letter-spacing:0.387px;"><span id="t128">15,…</span></div>
<div class="a t" style="left:1059px;top:292.5px;height:24px;line-height:24px;font-size:17.5px;color:#17163a;font-weight:bold;letter-spacing:0.585px;"><span id="t129">03/06/2025 16:39</span></div>
<svg style="position:absolute;left:41px;top:327.1px;overflow:visible" width="18" height="18" viewBox="0 0 16 16" ><path d="M8 1.6l1.95 4.1 4.45.6-3.25 3.1.8 4.45L8 11.7l-3.95 2.15.8-4.45L1.6 6.3l4.45-.6z" fill="#f1f1f5" stroke="#bcbcc6" stroke-width="1.0" stroke-linecap="round" stroke-linejoin="round"/></svg>
<div class="a t" style="left:118px;top:324.5px;height:24px;line-height:24px;font-size:17.5px;color:#17163a;letter-spacing:0.226px;"><span id="t130">Visio spectacle : Lancer votre chaîne YouTube et l…</span></div>
<div class="a" style="left:550px;top:331.75px;width:8px;height:8px;border-radius:4px;background:#ececf1;border:1.5px solid #c8c8d0;"></div>
<div class="a t" style="left:598px;top:324.5px;height:24px;line-height:24px;font-size:17.5px;color:#17163a;letter-spacing:0.083px;"><span id="t131">France Travail Culture Sp…</span></div>
<svg style="position:absolute;left:832.25px;top:327.15px;overflow:visible" width="16.5" height="16.5" viewBox="0 0 16 16" ><path d="M8.500 1.300C10.700 3.200 12.800 5.700 12.800 9.300c0 3.200-1.700 5.100-3.100 5.600 .4-1.300 0-3-1.700-4-1.700 1-2.100 2.700-1.700 4C4.900 14.400 3.200 12.500 3.200 9.600c0-2.100 1-3.600 1.900-4.400 .2 1.200 .8 2 1.600 2.200C8 6.200 8.600 3.600 8.500 1.300z" fill="#ececf1" fill-opacity="1" stroke="#cfcfd8" stroke-width="1.05" stroke-linejoin="round"/></svg>
<div class="a t" style="left:864px;top:324.5px;height:24px;line-height:24px;font-size:17.5px;color:#17163a;letter-spacing:0.549px;"><span id="t132">03/06/2025 …</span></div>
<div class="a t" style="left:1002px;top:324.5px;height:24px;line-height:24px;font-size:17.5px;color:#17163a;letter-spacing:0.052px;"><span id="t133">29,…</span></div>
<div class="a t" style="left:1059px;top:324.5px;height:24px;line-height:24px;font-size:17.5px;color:#17163a;letter-spacing:0.450px;"><span id="t134">03/06/2025 15:57</span></div>
<svg style="position:absolute;left:41px;top:359.1px;overflow:visible" width="18" height="18" viewBox="0 0 16 16" ><path d="M8 1.6l1.95 4.1 4.45.6-3.25 3.1.8 4.45L8 11.7l-3.95 2.15.8-4.45L1.6 6.3l4.45-.6z" fill="#f1f1f5" stroke="#bcbcc6" stroke-width="1.0" stroke-linecap="round" stroke-linejoin="round"/></svg>
<div class="a t" style="left:118px;top:356.5px;height:24px;line-height:24px;font-size:17.5px;color:#17163a;font-weight:bold;letter-spacing:-0.111px;"><span id="t135">Écris ta série !</span></div>
<svg class="a" style="left:241.5px;top:358.5px" width="19" height="20" viewBox="0 0 19 20"><circle cx="9.500" cy="10" r="9" fill="#ccd6dd"/><circle cx="9.500" cy="10" r="7.200" fill="#e1e8ed"/><path d="M9.500 4.500V10h4.500" stroke="#66757f" stroke-width="1.500" fill="none"/></svg>
<div class="a t" style="left:264.5px;top:356.5px;height:24px;line-height:24px;font-size:17.5px;color:#17163a;font-weight:bold;letter-spacing:-0.085px;"><span id="t136">Plus qu&#x27;un mois pour s&#x27;inscrir</span></div>
<div class="a" style="left:549.5px;top:363.25px;width:9px;height:9px;border-radius:5px;background:#3fae6a;border:1.5px solid #9fdcb8;"></div>
<div class="a t" style="left:598px;top:356.5px;height:24px;line-height:24px;font-size:17.5px;color:#17163a;font-weight:bold;letter-spacing:0.022px;"><span id="t137">La Trame</span></div>
<svg style="position:absolute;left:832.25px;top:359.15px;overflow:visible" width="16.5" height="16.5" viewBox="0 0 16 16" ><path d="M8.500 1.300C10.700 3.200 12.800 5.700 12.800 9.300c0 3.200-1.700 5.100-3.100 5.600 .4-1.300 0-3-1.700-4-1.700 1-2.100 2.700-1.700 4C4.900 14.400 3.200 12.500 3.200 9.600c0-2.100 1-3.600 1.900-4.400 .2 1.200 .8 2 1.600 2.200C8 6.200 8.600 3.600 8.500 1.300z" fill="#ececf1" fill-opacity="1" stroke="#cfcfd8" stroke-width="1.05" stroke-linejoin="round"/></svg>
<div class="a t" style="left:864px;top:356.5px;height:24px;line-height:24px;font-size:17.5px;color:#17163a;font-weight:bold;letter-spacing:0.823px;"><span id="t138">03/06/2025 …</span></div>
<div class="a t" style="left:1002px;top:356.5px;height:24px;line-height:24px;font-size:17.5px;color:#17163a;font-weight:bold;letter-spacing:0.390px;"><span id="t139">80,…</span></div>
<div class="a t" style="left:1059px;top:356.5px;height:24px;line-height:24px;font-size:17.5px;color:#17163a;font-weight:bold;letter-spacing:0.585px;"><span id="t140">03/06/2025 15:53</span></div>
</div>
<div class="a" style="left:437px;top:261px;width:1214px;height:1px;background:#b1b1b6;"></div>
<div class="a" style="left:437px;top:633px;width:1214px;height:1px;background:#b5b5ba;"></div>
<div class="a" style="left:437px;top:634px;width:1214px;height:130px;background:#fafafa;"></div>
<div class="a" style="left:950px;top:637px;width:112px;height:33px;background:#fafafa;border:1px solid #c6c6c9;border-radius:3px;"></div>
<svg style="position:absolute;left:959px;top:646.5px;overflow:visible" width="14" height="14" viewBox="0 0 16 16" ><path d="M6.200 2.500 1.200 7.500l5 5V9.700c3.800 0 6.300 1 8 3.800C14.200 8.500 11.200 5.600 6.200 5.300z" fill="#c4c4c8" stroke="#2a2930" stroke-width="1.0" stroke-linecap="round" stroke-linejoin="round"/></svg>
<div class="a t" style="left:976px;top:641.5px;height:24px;line-height:24px;font-size:17.5px;color:#2a2a2e;letter-spacing:0.304px;"><span id="t141">Répondre</span></div>
<div class="a" style="left:1065px;top:637px;width:117px;height:33px;background:#fafafa;border:1px solid #c6c6c9;border-radius:3px;"></div>
<svg style="position:absolute;left:1073px;top:646.5px;overflow:visible" width="14" height="14" viewBox="0 0 16 16" ><path d="M9.800 2.500l5 5-5 5V9.700c-3.800 0-6.300 1-8 3.800C1.800 8.500 4.800 5.600 9.800 5.300z" fill="#c4c4c8" stroke="#2a2930" stroke-width="1.0" stroke-linecap="round" stroke-linejoin="round"/></svg>
<div class="a t" style="left:1091px;top:641.5px;height:24px;line-height:24px;font-size:17.5px;color:#2a2a2e;letter-spacing:0.547px;"><span id="t142">Transférer</span></div>
<div class="a" style="left:1185px;top:637px;width:99px;height:33px;background:#fafafa;border:1px solid #c6c6c9;border-radius:3px;"></div>
<svg style="position:absolute;left:1193px;top:646.5px;overflow:visible" width="14" height="14" viewBox="0 0 16 16" ><rect x="1.5" y="1.8" width="13" height="12.4" rx="2.5" fill="#c4c4c8" stroke="#2a2930" stroke-width="1.1" stroke-linecap="round" stroke-linejoin="round"/><path d="M1.8 5.2 4.5 8h7l2.7-2.8" fill="none" stroke="#2a2930" stroke-width="1.1" stroke-linecap="round" stroke-linejoin="round"/><path d="M8 8v6M8 9.5h1M8 11h-1M8 12.5h1" fill="none" stroke="#2a2930" stroke-width="0.8800000000000001" stroke-linecap="round" stroke-linejoin="round"/></svg>
<div class="a t" style="left:1211px;top:641.5px;height:24px;line-height:24px;font-size:17.5px;color:#2a2a2e;letter-spacing:0.544px;"><span id="t143">Archiver</span></div>
<div class="a" style="left:1288px;top:637px;width:123px;height:33px;background:#fafafa;border:1px solid #c6c6c9;border-radius:3px;"></div>
<svg style="position:absolute;left:1295px;top:646.5px;overflow:visible" width="14" height="14" viewBox="0 0 16 16" ><path d="M7.2 1.5c.6 2.2-.6 3.3-1.8 4.6C4.200 7.300 3.500 8.500 3.500 10a4.500 4.500 0 0 0 3 4.300C5.800 13 6 11.500 7 10.500c.2 1 .8 1.500 1.500 2 .8-.9 1-2 .8-3 1.300 1 2 2.600 1.200 4.800A4.600 4.600 0 0 0 12.800 10c0-2-1-3.200-2-4.300-.3 .8-.6 1.300-1.300 1.700C9.800 5 9 2.800 7.200 1.500z" fill="#c4c4c8" stroke="#2a2930" stroke-width="1.1" stroke-linecap="round" stroke-linejoin="round"/></svg>
<div class="a t" style="left:1314px;top:641.5px;height:24px;line-height:24px;font-size:17.5px;color:#2a2a2e;letter-spacing:0.438px;"><span id="t144">Indésirable</span></div>
<div class="a" style="left:1414px;top:637px;width:117px;height:33px;background:#fafafa;border:1px solid #c6c6c9;border-radius:3px;"></div>
<svg style="position:absolute;left:1421px;top:646.5px;overflow:visible" width="14" height="14" viewBox="0 0 16 16" ><path d="M3.2 4.5h9.6l-.7 8.6a1.5 1.5 0 0 1-1.5 1.4H5.4a1.5 1.5 0 0 1-1.5-1.4z" fill="#c4c4c8" stroke="#2a2930" stroke-width="1.1" stroke-linecap="round" stroke-linejoin="round"/><path d="M2 4.5h12M6 4.2V2.8a1 1 0 0 1 1-1h2a1 1 0 0 1 1 1v1.4" fill="none" stroke="#2a2930" stroke-width="1.1" stroke-linecap="round" stroke-linejoin="round"/><path d="M6.3 7v5M8 7v5M9.7 7v5" fill="none" stroke="#2a2930" stroke-width="0.935" stroke-linecap="round" stroke-linejoin="round"/></svg>
<div class="a t" style="left:1439px;top:641.5px;height:24px;line-height:24px;font-size:17.5px;color:#2a2a2e;letter-spacing:0.533px;"><span id="t145">Supprimer</span></div>
<div class="a" style="left:1534px;top:637px;width:83px;height:33px;background:#fafafa;border:1px solid #c6c6c9;border-radius:3px;"></div>
<div class="a t" style="left:1542px;top:641.5px;height:24px;line-height:24px;font-size:17.5px;color:#2a2a2e;letter-spacing:0.684px;"><span id="t146">Autres</span></div>
<svg style="position:absolute;left:1596px;top:646.5px;overflow:visible" width="14" height="14" viewBox="0 0 16 16" ><path d="M3 5.5 8 10.5l5-5" fill="none" stroke="#3a3944" stroke-width="1.2" stroke-linecap="round" stroke-linejoin="round"/></svg>
<svg style="position:absolute;left:1625.5px;top:645px;overflow:visible" width="17" height="17" viewBox="0 0 16 16" ><path d="M8 1.6l1.95 4.1 4.45.6-3.25 3.1.8 4.45L8 11.7l-3.95 2.15.8-4.45L1.6 6.3l4.45-.6z" fill="#e6e6ea" stroke="#b9b9c2" stroke-width="1.0" stroke-linecap="round" stroke-linejoin="round"/></svg>
<div class="a t" style="left:446px;top:671.0px;height:24px;line-height:24px;font-size:17.5px;color:#5c5c5f;letter-spacing:-0.375px;"><span id="t147">De</span></div>
<div class="a t" style="left:496px;top:671.0px;height:24px;line-height:24px;font-size:17.5px;color:#15141a;letter-spacing:0.762px;"><span id="t148">developpement@tntb.net &lt;developpement@tntb.net&gt;</span></div>
<svg style="position:absolute;left:951px;top:676px;overflow:visible" width="14" height="14" viewBox="0 0 16 16" ><circle cx="8" cy="8" r="6.400" fill="none" stroke="#1a7ff0" stroke-width="1.5" stroke-linecap="round" stroke-linejoin="round"/><circle cx="8" cy="6.300" r="2.100" fill="none" stroke="#1a7ff0" stroke-width="1.5" stroke-linecap="round" stroke-linejoin="round"/><path d="M4 12.700c.500-2 2-3 4-3s3.500 1 4 3" fill="none" stroke="#1a7ff0" stroke-width="1.5" stroke-linecap="round" stroke-linejoin="round"/></svg>
<div class="a t" style="left:446px;top:702.0px;height:24px;line-height:24px;font-size:17.5px;color:#5c5c5f;letter-spacing:0.344px;"><span id="t149">Pour</span></div>
<div class="a t" style="left:496px;top:702.0px;height:24px;line-height:24px;font-size:17.5px;color:#15141a;letter-spacing:0.718px;"><span id="t150">lep0le@tntb.net &lt;lep0le@tntb.net&gt;</span></div>
<svg style="position:absolute;left:794px;top:707px;overflow:visible" width="14" height="14" viewBox="0 0 16 16" ><circle cx="8" cy="8" r="6.400" fill="none" stroke="#1a7ff0" stroke-width="1.5" stroke-linecap="round" stroke-linejoin="round"/><circle cx="8" cy="6.300" r="2.100" fill="none" stroke="#1a7ff0" stroke-width="1.5" stroke-linecap="round" stroke-linejoin="round"/><path d="M4 12.700c.500-2 2-3 4-3s3.500 1 4 3" fill="none" stroke="#1a7ff0" stroke-width="1.5" stroke-linecap="round" stroke-linejoin="round"/></svg>
<div class="a t" style="left:1498px;top:702.0px;height:24px;line-height:24px;font-size:17.5px;color:#2a2a2e;letter-spacing:0.450px;"><span id="t151">03/06/2025 21:45</span></div>
<div class="a t" style="left:446px;top:731.0px;height:24px;line-height:24px;font-size:17.5px;color:#5c5c5f;letter-spacing:0.276px;"><span id="t152">Sujet</span></div>
<div class="a t" style="left:496.5px;top:732.0px;height:24px;line-height:24px;font-size:18px;color:#15141a;font-weight:bold;letter-spacing:0.495px;"><span id="t153">test</span></div>
<div class="a" style="left:437px;top:764px;width:1214px;height:1px;background:#c9c9ce;"></div>
<div class="a" style="left:437px;top:765px;width:1214px;height:261px;background:#ffffff;"></div>
<div class="a t" style="left:445px;top:789.5px;height:15px;line-height:15px;font-size:12px;color:#8a8a90;font-family:'Liberation Mono',monospace;letter-spacing:-0.417px;"><span id="t154">--</span></div>
<div class="a t" style="left:445px;top:804.5px;height:15px;line-height:15px;font-size:12px;color:#7e7e84;font-family:'Liberation Mono',monospace;letter-spacing:-0.052px;"><span id="t155">Fatima KHALFI</span></div>
<div class="a t" style="left:445px;top:819.5px;height:15px;line-height:15px;font-size:12px;color:#7e7e84;font-family:'Liberation Mono',monospace;letter-spacing:-0.055px;"><span id="t156">Tél. 06.15.06.54.31.</span></div>
<div class="a" style="left:1651px;top:128px;width:1px;height:898px;background:#b5b5ba;"></div>
<div class="a" style="left:1652px;top:128px;width:268px;height:86px;background:#e9e9ed;"></div>
<div class="a t" style="left:1657px;top:169.5px;height:40px;line-height:40px;font-size:34px;color:#333338;font-weight:bold;"><span id="t157">4</span></div>
<div class="a t" style="left:1704px;top:166.6px;height:24px;line-height:24px;font-size:17.5px;color:#333338;font-weight:bold;letter-spacing:0.437px;"><span id="t158">Mer</span></div>
<div class="a t" style="left:1704px;top:189.5px;height:24px;line-height:24px;font-size:17.5px;color:#2a2a2e;letter-spacing:0.264px;"><span id="t159">jun 2025</span></div>
<div class="a t" style="left:1779px;top:189.5px;height:24px;line-height:24px;font-size:17.5px;color:#2a2a2e;letter-spacing:-0.197px;"><span id="t160">Sem. 23</span></div>
<svg style="position:absolute;left:1842px;top:172px;overflow:visible" width="12" height="12" viewBox="0 0 16 16" ><path d="M10.5 3 5.5 8l5 5" fill="none" stroke="#3a3944" stroke-width="1.2" stroke-linecap="round" stroke-linejoin="round"/></svg>
<div class="a" style="left:1861px;top:171.500px;width:11px;height:11px;border-radius:6px;border:1.2px solid #3a3944;"></div>
<svg style="position:absolute;left:1884px;top:172px;overflow:visible" width="12" height="12" viewBox="0 0 16 16" ><path d="M5.5 3l5 5-5 5" fill="none" stroke="#3a3944" stroke-width="1.2" stroke-linecap="round" stroke-linejoin="round"/></svg>
<svg style="position:absolute;left:1902px;top:181px;overflow:visible" width="14" height="14" viewBox="0 0 16 16" ><path d="M3 5.5 8 10.5l5-5" fill="none" stroke="#3a3944" stroke-width="1.2" stroke-linecap="round" stroke-linejoin="round"/></svg>
<div class="a" style="left:1652px;top:214px;width:268px;height:1px;background:#b5b5ba;"></div>
<div class="a" style="left:1652px;top:215px;width:268px;height:40px;background:#e9e9ed;"></div>
<svg style="position:absolute;left:1659px;top:229px;overflow:visible" width="15" height="15" viewBox="0 0 16 16" ><path d="M14.500 8.500V4.500a2 2 0 0 0-2-2h-9a2 2 0 0 0-2 2v8a2 2 0 0 0 2 2H9" fill="none" stroke="#3a3944" stroke-width="1.1" stroke-linecap="round" stroke-linejoin="round"/><path d="M1.500 6h13M4 1.200v1.600M12 1.200v1.600" fill="none" stroke="#3a3944" stroke-width="1.1" stroke-linecap="round" stroke-linejoin="round"/><path d="M4.500 8.500h.01M8 8.500h.01M4.500 11.500h.01M8 11.500h.01" fill="none" stroke="#3a3944" stroke-width="1.54" stroke-linecap="round" stroke-linejoin="round"/><path d="M12.500 10.500v5M10 13h5" fill="none" stroke="#3a3944" stroke-width="1.1" stroke-linecap="round" stroke-linejoin="round"/></svg>
<div class="a t" style="left:1681px;top:224.0px;height:24px;line-height:24px;font-size:17.5px;color:#2a2a2e;letter-spacing:0.471px;"><span id="t161">Nouvel évènement</span></div>
<div class="a" style="left:1652px;top:255px;width:268px;height:1px;background:#b5b5ba;"></div>
<div class="a" style="left:1652px;top:256px;width:268px;height:45px;background:#e4e4e6;"></div>
<div class="a t" style="left:1657px;top:267.0px;height:24px;line-height:24px;font-size:17.5px;color:#2a2a2e;font-weight:bold;letter-spacing:0.082px;"><span id="t162">Aujourd’hui</span></div>
<div class="a" style="left:1652px;top:301px;width:268px;height:339px;background:#fafafa;"></div>
<div class="a" style="left:1669px;top:320px;width:10px;height:10px;border-radius:5px;background:#f03a1f;"></div>
<div class="a t" style="left:1685px;top:312.0px;height:24px;line-height:24px;font-size:17.5px;color:#2a2a2e;font-weight:bold;letter-spacing:0.057px;"><span id="t163">10:00</span></div>
<div class="a t" style="left:1738px;top:312.0px;height:24px;line-height:24px;font-size:17.5px;color:#333336;letter-spacing:0.328px;"><span id="t164">rdv residence</span></div>
<div class="a t" style="left:1685px;top:333.0px;height:24px;line-height:24px;font-size:17.5px;color:#333336;letter-spacing:0.550px;"><span id="t165">journaliste chez Objectif</span></div>
<div class="a t" style="left:1685px;top:354.0px;height:24px;line-height:24px;font-size:17.5px;color:#333336;letter-spacing:0.031px;"><span id="t166">Gard</span></div>
<div class="a t" style="left:1729px;top:355.0px;height:24px;line-height:24px;font-size:14.5px;color:#58585e;letter-spacing:0.300px;"><span id="t167">dans 39 min</span></div>
<div class="a" style="left:1669px;top:407px;width:10px;height:10px;border-radius:5px;background:#c678e6;"></div>
<div class="a t" style="left:1685px;top:399.0px;height:24px;line-height:24px;font-size:17.5px;color:#2a2a2e;font-weight:bold;letter-spacing:0.060px;"><span id="t168">10:00</span></div>
<div class="a t" style="left:1738px;top:399.0px;height:24px;line-height:24px;font-size:17.5px;color:#333336;letter-spacing:0.520px;"><span id="t169">soutient jeanne</span></div>
<div class="a t" style="left:1685px;top:420.0px;height:24px;line-height:24px;font-size:17.5px;color:#333336;letter-spacing:-0.387px;"><span id="t170">avec SIMONE</span></div>
<div class="a t" style="left:1797px;top:421.0px;height:24px;line-height:24px;font-size:14.5px;color:#58585e;letter-spacing:0.300px;"><span id="t171">dans 39 min</span></div>
<div class="a" style="left:1669px;top:473px;width:10px;height:10px;border-radius:5px;background:#c678e6;"></div>
<div class="a t" style="left:1685px;top:465.0px;height:24px;line-height:24px;font-size:17.5px;color:#2a2a2e;font-weight:bold;letter-spacing:0.059px;"><span id="t172">14:00</span></div>
<div class="a t" style="left:1738px;top:465.0px;height:24px;line-height:24px;font-size:17.5px;color:#333336;letter-spacing:-0.953px;"><span id="t173">ATELIERS DESSIN</span></div>
<div class="a t" style="left:1685px;top:486.0px;height:24px;line-height:24px;font-size:17.5px;color:#333336;letter-spacing:-0.517px;"><span id="t174">JEANNE ET LINE</span></div>
<div class="a t" style="left:1824px;top:487.0px;height:24px;line-height:24px;font-size:14.5px;color:#58585e;letter-spacing:0.052px;"><span id="t175">dans 5 h</span></div>
<div class="a" style="left:1669px;top:539px;width:10px;height:10px;border-radius:5px;background:#6cc644;"></div>
<div class="a t" style="left:1685px;top:531.0px;height:24px;line-height:24px;font-size:17.5px;color:#2a2a2e;font-weight:bold;letter-spacing:0.059px;"><span id="t176">14:00</span></div>
<div class="a t" style="left:1738px;top:531.0px;height:24px;line-height:24px;font-size:17.5px;color:#333336;letter-spacing:0.610px;"><span id="t177">Street Photo</span></div>
<div class="a t" style="left:1685px;top:553.0px;height:24px;line-height:24px;font-size:14.5px;color:#58585e;letter-spacing:0.053px;"><span id="t178">dans 5 h</span></div>
<div class="a" style="left:1669px;top:605px;width:10px;height:10px;border-radius:5px;background:#f03a1f;"></div>
<div class="a t" style="left:1685px;top:597.0px;height:24px;line-height:24px;font-size:17.5px;color:#2a2a2e;font-weight:bold;letter-spacing:0.059px;"><span id="t179">16:30</span></div>
<div class="a t" style="left:1738px;top:597.0px;height:24px;line-height:24px;font-size:17.5px;color:#333336;letter-spacing:-0.009px;"><span id="t180">escalade</span></div>
<div class="a t" style="left:1813px;top:598.0px;height:24px;line-height:24px;font-size:14.5px;color:#58585e;letter-spacing:0.052px;"><span id="t181">dans 7 h</span></div>
<div class="a" style="left:1652px;top:640px;width:268px;height:40px;background:#e4e4e6;"></div>
<div class="a t" style="left:1657px;top:650.5px;height:24px;line-height:24px;font-size:17.5px;color:#2a2a2e;font-weight:bold;letter-spacing:0.157px;"><span id="t182">Demain</span></div>
<div class="a" style="left:1652px;top:680px;width:268px;height:1px;background:#b5b5ba;"></div>
<div class="a" style="left:1652px;top:681px;width:268px;height:55px;background:#e9e9ed;"></div>
<div class="a" style="left:1658px;top:700px;width:16px;height:16px;background:#f9f9fb;border:1px solid #9a9aa2;border-radius:3px;"></div>
<div class="a t" style="left:1686px;top:686.0px;height:24px;line-height:24px;font-size:17.5px;color:#2a2a2e;letter-spacing:0.407px;"><span id="t183">Afficher les tâches</span></div>
<div class="a t" style="left:1686px;top:707.0px;height:24px;line-height:24px;font-size:17.5px;color:#2a2a2e;letter-spacing:0.274px;"><span id="t184">accomplies</span></div>
<div class="a" style="left:1652px;top:736px;width:268px;height:1px;background:#b5b5ba;"></div>
<div class="a" style="left:1652px;top:737px;width:268px;height:25px;background:#ffffff;"></div>
<div class="a t" style="left:1658px;top:737.5px;height:24px;line-height:24px;font-size:17.5px;color:#15141a;letter-spacing:1.162px;"><span id="t185">Titre</span></div>
<svg style="position:absolute;left:1875px;top:743px;overflow:visible" width="14" height="14" viewBox="0 0 16 16" ><path d="M3 5.5 8 10.5l5-5" fill="none" stroke="#2a2930" stroke-width="1.2" stroke-linecap="round" stroke-linejoin="round"/></svg>
<div class="a" style="left:1894px;top:738px;width:1px;height:24px;background:#c9c9ce;"></div>
<svg style="position:absolute;left:1901px;top:743px;overflow:visible" width="13" height="13" viewBox="0 0 16 16" ><rect x="1.500" y="2.500" width="12" height="10.500" rx="1.800" fill="none" stroke="#2a2a30" stroke-width="1.2" stroke-linecap="round" stroke-linejoin="round"/><path d="M1.500 6h12M5.500 2.500v10.500M9.500 2.500v6" fill="none" stroke="#2a2a30" stroke-width="1.2" stroke-linecap="round" stroke-linejoin="round"/><rect x="8.500" y="9.300" width="7.500" height="6" fill="#ffffff"/><path d="M9.300 10.200h6.200l-3.100 4z" fill="#2a2a30"/></svg>
<div class="a" style="left:1652px;top:762px;width:268px;height:1px;background:#c9c9ce;"></div>
<div class="a" style="left:1652px;top:763px;width:268px;height:221px;background:#fafafa;"></div>
<div class="a" style="left:1652px;top:984px;width:268px;height:42px;background:#e9e9ed;"></div>
<div class="a" style="left:1654px;top:988px;width:262px;height:31px;background:#f6f6f8;border:1px solid #b9b9bf;border-radius:3px;"></div>
<div class="a t" style="left:1659px;top:991.5px;height:24px;line-height:24px;font-size:17.5px;color:#45454a;letter-spacing:0.562px;width:255px;overflow:hidden;"><span id="t186">Veuillez sélectionner un agenda</span></div>
<div class="a" style="left:55px;top:1025px;width:1865px;height:1px;background:#c9c9ce;"></div>
<div class="a" style="left:55px;top:1026px;width:1865px;height:27px;background:#e9e9ed;"></div>
<svg style="position:absolute;left:61px;top:1032px;overflow:visible" width="16" height="16" viewBox="0 0 16 16" ><circle cx="8" cy="8" r="1.300" fill="none" stroke="#2a2930" stroke-width="1.0" stroke-linecap="round" stroke-linejoin="round"/><path d="M5.500 5.500a3.500 3.500 0 0 0 0 5M10.500 5.500a3.500 3.500 0 0 1 0 5M3.300 3.500a6.500 6.500 0 0 0 0 9M12.700 3.500a6.500 6.500 0 0 1 0 9" fill="none" stroke="#2a2930" stroke-width="1.0" stroke-linecap="round" stroke-linejoin="round"/></svg>
<div class="a t" style="left:93px;top:1027.5px;height:24px;line-height:24px;font-size:17.5px;color:#15141a;letter-spacing:0.612px;"><span id="t187">lep0le@tntb.net est à jour</span></div>
<div class="a" style="left:1489px;top:1038px;width:180px;height:4px;background:#d9d9de;border-radius:2px;"></div>
<div class="a" style="left:1489px;top:1038px;width:90px;height:4px;background:#1373d9;border-radius:2px;"></div>
<svg style="position:absolute;left:1679.5px;top:1030.5px;overflow:visible" width="17" height="17" viewBox="0 0 16 16" ><rect x="1.500" y="2.500" width="13" height="12" rx="2" fill="#fff" stroke="#15141a" stroke-width="1.3" stroke-linecap="round" stroke-linejoin="round"/><path d="M1.500 5.500h13" fill="none" stroke="#15141a" stroke-width="1.3" stroke-linecap="round" stroke-linejoin="round"/><path d="M4 1.200v1.600M12 1.200v1.600" fill="none" stroke="#15141a" stroke-width="1.3" stroke-linecap="round" stroke-linejoin="round"/><text x="8" y="13" font-family="Liberation Sans" font-weight="bold" font-size="8" text-anchor="middle" fill="#15141a">4</text></svg>
<div class="a t" style="left:1701px;top:1027.5px;height:24px;line-height:24px;font-size:17.5px;color:#15141a;letter-spacing:0.149px;"><span id="t188">Panneau « Aujourd’hui »</span></div>
<svg style="position:absolute;left:1900px;top:1033px;overflow:visible" width="13" height="13" viewBox="0 0 16 16" ><path d="M3 5.5 8 10.5l5-5" fill="none" stroke="#2a2a30" stroke-width="1.3" stroke-linecap="round" stroke-linejoin="round"/></svg>
<div class="a" style="left:55px;top:128px;width:1865px;height:1px;background:#b9b9be;"></div>
<div class="a" style="left:0px;top:1053px;width:1920px;height:27px;background:#4c4f4b;"></div>
<svg class="a" style="left:10px;top:1054px" width="24" height="24" viewBox="0 0 24 24"><circle cx="12" cy="12" r="10.3" fill="none" stroke="#d6d6d6" stroke-width="1.7"/><path d="M7.500 7v6.500a2.500 2.500 0 0 0 2.500 2.500h4.500a2.500 2.500 0 0 0 2.500-2.500V10a1.600 1.600 0 0 0-3.200 0v3.500M13.800 10a1.600 1.600 0 0 0-3.200 0v3.500" fill="none" stroke="#d6d6d6" stroke-width="1.700" stroke-linecap="round"/></svg>
<svg class="a" style="left:39px;top:1056px" width="22" height="20" viewBox="0 0 22 20"><rect x="0" y="0" width="22" height="19" rx="1.500" fill="#58bfa6"/><rect x="0" y="0" width="22" height="4" rx="1.500" fill="#47a58e"/></svg>
<svg class="a" style="left:64px;top:1056px" width="22" height="20" viewBox="0 0 22 20"><path d="M0 4h22v14a1.500 1.500 0 0 1-1.500 1.500H1.500A1.500 1.500 0 0 1 0 18z" fill="#58bfa6"/><path d="M2 4V2.500A1.500 1.500 0 0 1 3.500 1h6l2 3z" fill="#eef7f4"/><rect x="0" y="4" width="22" height="1.200" fill="#47a58e"/></svg>
<svg class="a" style="left:91.5px;top:1055.4px" width="21" height="21" viewBox="0 0 22 22"><rect x="0.5" y="0.5" width="21" height="21" rx="4" fill="#262626" stroke="#1a1a1a"/><text x="3" y="10" font-family="Liberation Mono" font-weight="bold" font-size="7.500" fill="#fff">$_</text></svg>
<svg class="a" style="left:118.5px;top:1055.4px" width="21" height="21" viewBox="0 0 22 22"><rect x="0.5" y="0.5" width="21" height="21" rx="5" fill="#ff6f3a" /><path d="M11 4.500c1 .8 1.500 1.800 1.500 2.800 1.500-.5 2.300-1.500 2.500-2.800 2.200 1.800 3.200 4.300 3 6.800-.3 3.800-3.300 6.500-7 6.500S4 15 4 11.300c0-2 .8-3.700 2-5 0 1 .3 1.800 1 2.400C7.500 6.800 9 5.300 11 4.500z" fill="#fff"/><circle cx="11.800" cy="11.300" r="2.600" fill="#ff6f3a"/><path d="M8.500 10.500c1-.8 2.500-.8 3.500 0l-1.500 1z" fill="#fff"/></svg>
<svg class="a" style="left:144px;top:1054px" width="24" height="24" viewBox="0 0 24 24"><defs><linearGradient id="sw1" x1="0" y1="1" x2="1" y2="0"><stop offset="0" stop-color="#ffffff"/><stop offset=".25" stop-color="#7fd4ff"/><stop offset=".5" stop-color="#2a6cf0"/><stop offset=".8" stop-color="#1840c0"/><stop offset="1" stop-color="#bfe4ff"/></linearGradient></defs><rect width="24" height="24" fill="#000"/><path d="M0 21C6 19 8 14 11 9 14 4 17 1 20 0h4v24H0z" fill="url(#sw1)"/><path d="M8 24C14 20 19 13 24 6v4C20 16 16 21 12 24zM15 24c3-3 6-6 9-10v4c-2 2-4 4-6 6z" fill="#0a1e8a" opacity=".75"/><path d="M11 24C16 20 20 15 24 9.500" stroke="#6ab0ff" stroke-width="1" fill="none"/><path d="M0 21.500C5 21 9 20 13 24H0z" fill="#ffffff"/></svg>
<svg class="a" style="left:172.5px;top:1055.4px" width="21" height="21" viewBox="0 0 22 22"><rect width="22" height="22" rx="1.500" fill="#c9301f"/><g fill="#a82213"><rect x="3" y="3" width="6" height="6"/><rect x="13" y="3" width="6" height="6"/><rect x="3" y="13" width="6" height="6"/><rect x="11" y="11" width="3" height="3"/><rect x="15" y="14" width="4" height="5"/><rect x="10" y="5" width="2" height="4"/></g></svg>
<svg class="a" style="left:199.5px;top:1055.4px" width="21" height="21" viewBox="0 0 22 22"><rect x="0.5" y="0.5" width="21" height="21" rx="4" fill="#b3151a" stroke="#8e0f13"/><text x="3.500" y="17" font-family="Liberation Sans" font-weight="bold" font-style="italic" font-size="15" fill="#fff">F</text><text x="11" y="17" font-family="Liberation Sans" font-weight="bold" font-style="italic" font-size="12" fill="#fff">z</text></svg>
<svg class="a" style="left:226.5px;top:1055.4px" width="21" height="21" viewBox="0 0 22 22"><rect x="0.5" y="0.5" width="21" height="21" rx="4" fill="#4b79c4" stroke="#3a62a6"/><rect x="3.500" y="6" width="15" height="10.500" fill="#e9edf3"/><path d="M3.500 6.500 11 12.500l7.500-6M3.500 16l5-5M18.500 16l-5-5" stroke="#b6bcc8" stroke-width="0.900" fill="none"/></svg>
<svg class="a" style="left:253.5px;top:1055.4px" width="21" height="21" viewBox="0 0 22 22"><rect x="0.5" y="0.5" width="21" height="21" rx="5" fill="#aaa2e2" /><path d="M5 7h12M5 10h12M5 13h12M5 16h7" stroke="#fff" stroke-width="1.300"/></svg>
<svg class="a" style="left:280.5px;top:1055.4px" width="21" height="21" viewBox="0 0 22 22"><rect x="0.5" y="0.5" width="21" height="21" rx="4" fill="#3e3e3e" stroke="#2e2e2e"/><path d="M11 1v20M1 11h20" stroke="#2a2a2a" stroke-width="1"/><path d="M11.500 11.500h10v6a4 4 0 0 1-4 4h-6z" fill="#f28c28"/><path d="M3.500 6h5M6 3.500v5M13.500 6h5M4 14l4 4M8 14l-4 4M14 15h5M14 18h5" stroke="#fff" stroke-width="1.300"/></svg>
<svg class="a" style="left:307.5px;top:1055.4px" width="21" height="21" viewBox="0 0 22 22"><rect x="0.5" y="0.5" width="21" height="21" rx="4" fill="#c2a13a" stroke="#a88a2c"/><path d="M3 15h9l2-1.500h4v3H3z" fill="#fff"/><path d="M15 11c3-1.500-1.500-3 1-5" stroke="#fff" stroke-width="1.200" fill="none" stroke-linecap="round"/></svg>
<svg class="a" style="left:334.5px;top:1055.4px" width="21" height="21" viewBox="0 0 22 22"><defs><linearGradient id="rb1" x1="0" y1="0" x2="1" y2="0"><stop offset="0" stop-color="#d61fd0"/><stop offset=".35" stop-color="#7a3be8"/><stop offset=".7" stop-color="#3bd0c0"/><stop offset="1" stop-color="#6be03b"/></linearGradient><linearGradient id="rb2" x1="0" y1="0" x2="0" y2="1"><stop offset=".4" stop-color="#ffd83b" stop-opacity="0"/><stop offset="1" stop-color="#ffb13b"/></linearGradient></defs><rect x="0.5" y="0.5" width="21" height="21" rx="5" fill="url(#rb1)" /><rect x="0.5" y="0.5" width="21" height="21" rx="5" fill="url(#rb2)" /><path d="M6.500 7 11 2.500 15.500 7" stroke="#e6e6ee" stroke-width="1.800" fill="none"/></svg>
<svg class="a" style="left:361.5px;top:1055.4px" width="21" height="21" viewBox="0 0 22 22"><rect x="0.5" y="0.5" width="21" height="21" rx="5" fill="#e8323f" /><path d="M6 7 11 2.500 16 7" stroke="#f0c8cc" stroke-width="1.800" fill="none"/><path d="M6.500 7v11l10-5.500z" fill="#fff"/></svg>
<svg class="a" style="left:388.5px;top:1055.4px" width="21" height="21" viewBox="0 0 22 22"><rect x="0.5" y="0.5" width="21" height="21" rx="4" fill="#3c8a36" stroke="#2f7029"/><path d="M6 7.500 11 3l5 4.500" stroke="#d6e6d4" stroke-width="1.700" fill="none"/><path d="M5.500 8h8v8h-8z" fill="#fff"/><path d="M5 18h12M14.500 10h3M14.500 13h3" stroke="#fff" stroke-width="1.200"/></svg>
<svg class="a" style="left:415.5px;top:1055.4px" width="21" height="21" viewBox="0 0 22 22"><rect x="0.5" y="0.5" width="21" height="21" rx="5" fill="#141a6e" /><circle cx="11" cy="12.500" r="5" fill="#f7c81e"/><path d="M7 13.500c1.500-2 2.500 1.500 4 0s2.500 1.500 4 0v2.500H7z" fill="#f0401e"/><path d="M4.500 14V11a6.500 6.500 0 0 1 13 0v3" stroke="#fff" stroke-width="1.800" fill="none"/><rect x="3" y="11.500" width="3.500" height="6" rx="1.500" fill="#fff"/><rect x="15.500" y="11.500" width="3.500" height="6" rx="1.500" fill="#fff"/></svg>
<svg class="a" style="left:442.5px;top:1055.4px" width="21" height="21" viewBox="0 0 22 22"><rect x="0.500" y="6" width="21" height="15.500" rx="3" fill="#333" stroke="#262626"/><path d="M1 5.500 20 1.500l.6 2.500L1.500 8z" fill="#333"/><path d="M3 6.500 5.500 3M7.500 5.500 10 2.200M12 4.600l2.500-3.300M16.500 3.700 19 .5" stroke="#fff" stroke-width="1.500"/></svg>
<svg class="a" style="left:469.5px;top:1055.4px" width="21" height="21" viewBox="0 0 22 22"><rect x="0.5" y="0.5" width="21" height="21" rx="5" fill="#3d9ff0" /><path d="M6.500 7 11 2.500 15.500 7" stroke="#d8e8f6" stroke-width="1.800" fill="none"/><path d="M6 16.500a3 3 0 0 1 0-6 4.500 4.500 0 0 1 8.500-1 3.600 3.600 0 0 1 1 7z" fill="#eef3f8"/></svg>
<svg class="a" style="left:496.5px;top:1055.4px" width="21" height="21" viewBox="0 0 22 22"><rect x="0.5" y="0.5" width="21" height="21" rx="5" fill="#c2c2c2" /><path d="M1 6l6.500 11M7.500 6 14 17M14 6l6.500 11" stroke="#333" stroke-width="2.300"/><path d="M1 17 7.500 6" stroke="#e0502e" stroke-width="2.300"/><path d="M7.500 17 14 6" stroke="#d03c6e" stroke-width="2.300"/><path d="M14 17 20.500 6" stroke="#2ea05a" stroke-width="2.300"/></svg>
<svg class="a" style="left:527.5px;top:1055.4px" width="21" height="21" viewBox="0 0 22 22"><rect x="0.5" y="0.5" width="21" height="21" rx="5" fill="#456bb0" stroke="#38578f"/><path d="M11 3.500c3 2.500 4.500 5.500 4 9l-2.500 5h-3l-2.500-5c-.5-3.500 1-6.500 4-9z" fill="#fff"/><path d="M11 7v6" stroke="#456bb0" stroke-width="1.200"/><circle cx="11" cy="13" r="1.300" fill="#456bb0"/></svg>
<svg class="a" style="left:556px;top:1055px" width="24" height="22" viewBox="0 0 24 22"><path d="M14 4.500 23 11l-9 6.500z" fill="#3f8fe0"/><path d="M1 8h9M3 11h7M1 14h9" stroke="#6aa8ea" stroke-width="1.600"/><path d="M11.500 2v18" stroke="#e0805a" stroke-width="1.600"/><path d="M9.500 2h4" stroke="#e0805a" stroke-width="1.300"/></svg>
<svg class="a" style="left:584.5px;top:1055.4px" width="21" height="21" viewBox="0 0 22 22"><rect x="0.5" y="0.5" width="21" height="21" rx="4" fill="#4a3c92" stroke="#3a2e78"/><path d="M11 11 17 4M11 11 4 8M11 11 6 18M11 11l6 5" stroke="#fff" stroke-width="1.200"/><circle cx="11" cy="11" r="2.300" fill="#4a3c92" stroke="#fff" stroke-width="1.300"/><circle cx="17.500" cy="3.800" r="1.700" fill="#fff"/><circle cx="3.800" cy="7.800" r="1.500" fill="#fff"/><circle cx="5.800" cy="18" r="1.500" fill="#fff"/><circle cx="17.500" cy="16.500" r="1.500" fill="#fff"/></svg>
<div class="a" style="left:620px;top:1053px;width:240px;height:27px;background:#409e8b;"></div>
<svg class="a" style="left:625px;top:1058px" width="18" height="16" viewBox="0 0 18 16"><rect x="0.5" y="0.5" width="17" height="15" rx="3" fill="#4b79c4" /><rect x="3.500" y="4" width="11" height="8" fill="#eef1f6"/><path d="M3.500 4.500 9 9l5.500-4.500" stroke="#aab2c2" stroke-width="0.800" fill="none"/></svg>
<div class="a t" style="left:648px;top:1055.0px;height:24px;line-height:24px;font-size:17.5px;color:#e6f6f1;letter-spacing:0.796px;"><span id="t195">Courrier entrant - lep0…</span></div>
<div class="a t" style="left:1451px;top:1054.0px;height:24px;line-height:24px;font-size:18px;color:#d2d2d2;letter-spacing:2.004px;"><span id="t196">fr</span></div>
<svg class="a" style="left:1470px;top:1055px" width="25" height="23" viewBox="0 0 25 23"><rect x="3" y="1" width="20" height="15" rx="1" fill="#f2f2f2" stroke="#cfcfcf"/><rect x="5" y="3" width="16" height="11" fill="#5a6a7a"/><path d="M10 16h6l1 4H9z" fill="#dcdcdc"/><rect x="6" y="20" width="14" height="1.800" fill="#e6e6e6"/><path d="M1 14V1l16 13z" fill="#e6c62e" stroke="#b89a14" stroke-width="0.800"/><path d="M4 11V7.500l4.500 3.500z" fill="#5a6a7a"/></svg>
<svg class="a" style="left:1537px;top:1059px" width="24" height="18" viewBox="0 0 24 18"><path d="M1 7 19 3l4 3v11H1z" fill="#f2da2e"/><path d="M1 7 14 1l6 2z" fill="#f8ec8a"/><path d="M1 17h22" stroke="#c8b21e" stroke-width="1"/></svg>
<div class="a" style="left:1562px;top:1053px;width:38px;height:27px;background:#000000;"></div>
<svg class="a" style="left:1562px;top:1053px" width="38" height="27" viewBox="0 0 38 27"><path d="M0 27v-2l3-1 2 1 3-1 2 1 3-3 2 1 2-4 3-3 1-3 1-4 1 3 2-1 1 3 2-2 1 4 2-1 2 3v9z" fill="#1f83d6"/><path d="M17 17l3-3 1-3 1-4 1 3 2-1 1 3 2-2 1 4" stroke="#4aa8f0" stroke-width="0.800" fill="none"/></svg>
<svg class="a" style="left:1609px;top:1055px" width="18" height="24" viewBox="0 0 18 24"><ellipse cx="9" cy="12" rx="7.500" ry="10.500" fill="none" stroke="#cfcfcf" stroke-width="1.700"/><path d="M5.500 8.500 12 15l-3 3V6l3 3-6.500 6.500" fill="none" stroke="#cfcfcf" stroke-width="1.400"/></svg>
<svg class="a" style="left:1633px;top:1054px" width="19" height="24" viewBox="0 0 19 24"><rect x="2.200" y="4" width="14.600" height="18" rx="1.200" fill="none" stroke="#cfcfcf" stroke-width="2.200"/><rect x="6" y="1" width="7" height="3.500" fill="#cfcfcf"/></svg>
<svg class="a" style="left:1658px;top:1054px" width="21" height="24" viewBox="0 0 21 24"><rect x="2.200" y="5" width="16.600" height="17" rx="1.200" fill="none" stroke="#cfcfcf" stroke-width="2.200"/><rect x="7" y="1.500" width="7" height="5" rx="1" fill="#cfcfcf"/><path d="M10.500 9.500v6" stroke="#cfcfcf" stroke-width="2.400"/><rect x="9.300" y="17" width="2.400" height="2.400" fill="#cfcfcf"/></svg>
<svg class="a" style="left:1683px;top:1054px" width="26" height="25" viewBox="0 0 26 25"><path d="M11.500 2c3 2 6 2.800 9 3 0 7-2 13-9 17C4.500 18 2.500 12 2.500 5c3-.2 6-1 9-3z" fill="none" stroke="#cfcfcf" stroke-width="2"/><path d="M11.500 4.500c2 1.300 4.500 2 6.500 2.300-.2 5-1.800 9.500-6.500 12.500z" fill="#9a9a9a"/><circle cx="19" cy="20" r="4" fill="#f0702a"/></svg>
<svg class="a" style="left:1710px;top:1057px" width="24" height="20" viewBox="0 0 24 20"><path d="M1.500 7a15 15 0 0 1 21 0" stroke="#8a8a8a" stroke-width="2.400" fill="none"/><path d="M5 11a10 10 0 0 1 14 0" stroke="#cfcfcf" stroke-width="2.400" fill="none"/><path d="M8.300 14.300a5.300 5.300 0 0 1 7.400 0" stroke="#cfcfcf" stroke-width="2.400" fill="none"/><path d="M12 19.500l-2.800-3.500h5.600z" fill="#cfcfcf"/></svg>
<svg class="a" style="left:1735px;top:1056px" width="24" height="22" viewBox="0 0 24 22"><path d="M1.500 7.500h4l5-4.500v16l-5-4.500h-4z" fill="#cfcfcf"/><path d="M13.500 7.500a5 5 0 0 1 0 7M16.500 5a8.500 8.500 0 0 1 0 12M19.500 2.500a12 12 0 0 1 0 17" stroke="#cfcfcf" stroke-width="1.700" fill="none"/></svg>
<div class="a t" style="left:1767px;top:1055.0px;height:24px;line-height:24px;font-size:17.5px;color:#d6d6e6;letter-spacing:0.317px;"><span id="t197">mer.</span></div>
<div class="a t" style="left:1811px;top:1055.0px;height:24px;line-height:24px;font-size:17.5px;color:#d6d6e6;letter-spacing:0.637px;"><span id="t198">4 juin, 09:21</span></div>
<svg class="a" style="left:709.300px;top:278.800px" width="14" height="21" viewBox="0 0 14 21"><path d="M1 1v15.500l3.700-3.300 2.600 6 2.300-1-2.600-5.900 5-.3z" fill="#111" stroke="#fff" stroke-width="1.100" stroke-linejoin="round"/></svg>
</div>
<div class="a" style="left:1278px;top:6px;width:636px;height:170px;background:#111111;"></div>
<svg class="a" style="left:1291px;top:28.5px" width="48" height="47" viewBox="0 0 48 47">
<defs><linearGradient id="tb1" x1="0" y1="0" x2="0" y2="1"><stop offset="0" stop-color="#1c8bea"/><stop offset="0.7" stop-color="#1a80e2"/><stop offset="1" stop-color="#1466c8"/></linearGradient>
<linearGradient id="tb2" x1="0" y1="0" x2="0" y2="1"><stop offset="0" stop-color="#ffffff"/><stop offset="1" stop-color="#b5dafa"/></linearGradient>
<linearGradient id="tb3" x1="0" y1="0" x2="1" y2="1"><stop offset="0" stop-color="#1c86e6"/><stop offset="1" stop-color="#146ad0"/></linearGradient></defs>
<path d="M1 22C2 36 12 46.600 24.600 46.600L26 28 10 22z" fill="#1a80e2"/>
<path d="M9 5.200C12 8.500 13.300 12.500 12.800 17.500 13 24 12 30 14 35L6 36C2.500 31 .4 25 .6 16L3.300 19.300C4 13 6 8.500 9 5.200z" fill="url(#tb3)"/>
<path d="M15.800 13.300C19 5.500 26 .5 34.500 .6c4 .1 8 1.200 11.500 3L42.300 5.800l4.500 2.400-2.600 1.300C47 13.500 48.300 18 48 23 47.300 36.500 37.500 46.600 24.600 46.600 13 46.600 3.500 39 1.300 27.500c3 6 8 9.500 13.500 9.500C13 30 12 22 15.800 13.300z" fill="url(#tb1)"/>
<path d="M15.800 13.300C17.500 9 20.500 5.500 24.500 3.300 20.500 6.500 18 10.500 17.200 15z" fill="#8f86e6"/>
<path d="M24 1.800C28 .2 33 .2 37 1.300 33 .9 28.500 1.300 24 3.300z" fill="#8f86e6" opacity=".8"/>
<ellipse cx="25" cy="7" rx="1.500" ry="1" fill="#f4f9ff" transform="rotate(-18 25 7)"/>
<circle cx="24" cy="24.500" r="11.800" fill="url(#tb2)"/>
<path d="M13.500 19.500 22.500 26.500a2.500 2.500 0 0 0 3 0L35 19.300" fill="none" stroke="#ffffff" stroke-width="1.150" opacity=".9"/>
<path d="M13 19.800 22.500 27.200a2.500 2.500 0 0 0 3 0L35.300 19.800 35.800 24 24 33 12.300 24z" fill="#cfe5fb" opacity=".55"/>
<path d="M36.500 26.500C35 32.500 29.500 35 23.300 32.600 26 35.500 29 37 33 37.500 24 40 14 36 13.500 27 11 35 17 43 26.500 42.500 35 42 39 34 36.500 26.500z" fill="#1a82e4"/>
<path d="M35.800 27.500C34 32 29 34 23.300 32.600 29 36 35 33.500 35.800 27.500z" fill="#7f86ea" opacity=".85"/>
<path d="M8 18c-3 7-1 14 3.500 18.500C8.500 31 8 25 9.500 19.500z" fill="#7f86ea" opacity=".75"/>
</svg>
<div class="a t" style="left:1347px;top:26.700000000000003px;height:28px;line-height:28px;font-size:21.5px;color:#ffffff;font-weight:bold;letter-spacing:0.440px;"><span id="t189">Thunderbird</span></div>
<div class="a t" style="left:1347px;top:52.5px;height:24px;line-height:24px;font-size:17.5px;color:#efefef;letter-spacing:0.555px;"><span id="t190">L’opération courante « Courrier entrant » n’a pas abouti. Le</span></div>
<div class="a t" style="left:1347px;top:74.5px;height:24px;line-height:24px;font-size:17.5px;color:#efefef;letter-spacing:0.711px;"><span id="t191">serveur de courrier pour le compte lep0le@tntb.net a répondu :</span></div>
<div class="a t" style="left:1347px;top:96.5px;height:24px;line-height:24px;font-size:17.5px;color:#efefef;letter-spacing:0.487px;"><span id="t192">[SERVERBUG] Internal error occurred. Refer to server log for</span></div>
<div class="a t" style="left:1347px;top:118.5px;height:24px;line-height:24px;font-size:17.5px;color:#efefef;letter-spacing:0.826px;"><span id="t193">more information. [2025-06-04 07:21:02] (0.031 + 0.000 +</span></div>
<div class="a t" style="left:1347px;top:140.5px;height:24px;line-height:24px;font-size:17.5px;color:#efefef;letter-spacing:0.243px;"><span id="t194">0.030 secs).</span></div>
</body></html>
